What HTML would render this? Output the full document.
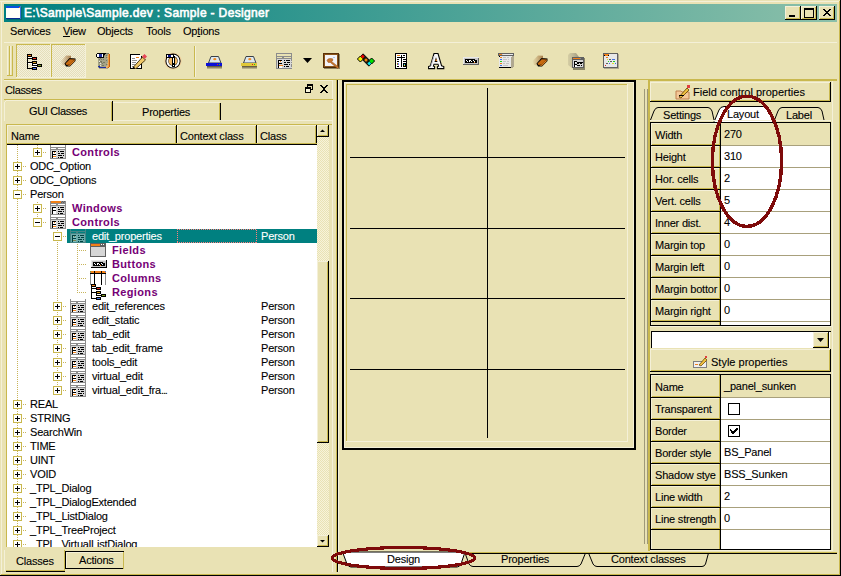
<!DOCTYPE html><html><head><meta charset="utf-8"><style>*{margin:0;padding:0;box-sizing:border-box}html,body{width:841px;height:576px;overflow:hidden;background:#E9E2B4;font-family:"Liberation Sans",sans-serif;font-size:11px;color:#000;position:relative}.a{position:absolute}.t{white-space:nowrap;line-height:13px;letter-spacing:-0.2px;-webkit-text-stroke:0.1px currentColor}u{text-decoration:underline}</style></head><body><div class="a" style="left:0px;top:1px;width:841px;height:1px;background:#F4F0D8;"></div><div class="a" style="left:1px;top:1px;width:1px;height:574px;background:#F4F0D8;"></div><div class="a" style="left:839px;top:1px;width:1px;height:574px;background:#C9B84E;"></div><div class="a" style="left:1px;top:574px;width:839px;height:1px;background:#C9B84E;"></div><div class="a" style="left:840px;top:0px;width:1px;height:576px;background:#000;"></div><div class="a" style="left:0px;top:575px;width:841px;height:1px;background:#000;"></div><div class="a" style="left:4px;top:4px;width:833px;height:18px;background:#008080;background:linear-gradient(to right,#008080,#8CC0AA)"></div><svg class="a" style="left:6px;top:6px" width="16" height="14"><rect x="1" y="1" width="15" height="13" fill="#005858" opacity="0.5"/><rect x="0" y="0" width="15" height="13" fill="#FFFFF8"/><rect x="0" y="0" width="15" height="2" fill="#0A50E0"/><rect x="0" y="12" width="15" height="1" fill="#0A2A90"/><rect x="14" y="0" width="1" height="13" fill="#3A70D8"/><rect x="13" y="1" width="1" height="1" fill="#F06030"/></svg><div class="a t" style="left:24px;top:5px;color:#fff;font-size:12px;line-height:16px;letter-spacing:0.35px;-webkit-text-stroke:0.6px #fff">E:\Sample\Sample.dev : Sample - Designer</div><div class="a" style="left:785px;top:6px;width:16px;height:14px;background:#E9E2B4;"></div><div class="a" style="left:785px;top:6px;width:16px;height:1px;background:#F4F0D8;"></div><div class="a" style="left:785px;top:6px;width:1px;height:14px;background:#F4F0D8;"></div><div class="a" style="left:785px;top:19px;width:16px;height:1px;background:#000000;"></div><div class="a" style="left:800px;top:6px;width:1px;height:14px;background:#000000;"></div><div class="a" style="left:786px;top:18px;width:14px;height:1px;background:#C9B84E;"></div><div class="a" style="left:799px;top:7px;width:1px;height:12px;background:#C9B84E;"></div><svg class="a" style="left:785px;top:6px" width="16" height="14"><rect x="4" y="9" width="6" height="2" fill="#000"/></svg><div class="a" style="left:801px;top:6px;width:16px;height:14px;background:#E9E2B4;"></div><div class="a" style="left:801px;top:6px;width:16px;height:1px;background:#F4F0D8;"></div><div class="a" style="left:801px;top:6px;width:1px;height:14px;background:#F4F0D8;"></div><div class="a" style="left:801px;top:19px;width:16px;height:1px;background:#000000;"></div><div class="a" style="left:816px;top:6px;width:1px;height:14px;background:#000000;"></div><div class="a" style="left:802px;top:18px;width:14px;height:1px;background:#C9B84E;"></div><div class="a" style="left:815px;top:7px;width:1px;height:12px;background:#C9B84E;"></div><svg class="a" style="left:801px;top:6px" width="16" height="14"><rect x="3" y="2" width="9" height="9" fill="none" stroke="#000" stroke-width="1" transform="translate(0.5,0.5)"/><rect x="3" y="2" width="9" height="2" fill="#000"/></svg><div class="a" style="left:819px;top:6px;width:16px;height:14px;background:#E9E2B4;"></div><div class="a" style="left:819px;top:6px;width:16px;height:1px;background:#F4F0D8;"></div><div class="a" style="left:819px;top:6px;width:1px;height:14px;background:#F4F0D8;"></div><div class="a" style="left:819px;top:19px;width:16px;height:1px;background:#000000;"></div><div class="a" style="left:834px;top:6px;width:1px;height:14px;background:#000000;"></div><div class="a" style="left:820px;top:18px;width:14px;height:1px;background:#C9B84E;"></div><div class="a" style="left:833px;top:7px;width:1px;height:12px;background:#C9B84E;"></div><svg class="a" style="left:819px;top:6px" width="16" height="14"></svg><svg class="a" style="left:823px;top:9px" width="8" height="7" shape-rendering="crispEdges"><rect x="0" y="0" width="2" height="1" fill="#000000"/><rect x="6" y="0" width="2" height="1" fill="#000000"/><rect x="1" y="1" width="2" height="1" fill="#000000"/><rect x="5" y="1" width="2" height="1" fill="#000000"/><rect x="2" y="2" width="4" height="1" fill="#000000"/><rect x="3" y="3" width="2" height="1" fill="#000000"/><rect x="2" y="4" width="4" height="1" fill="#000000"/><rect x="1" y="5" width="2" height="1" fill="#000000"/><rect x="5" y="5" width="2" height="1" fill="#000000"/><rect x="0" y="6" width="2" height="1" fill="#000000"/><rect x="6" y="6" width="2" height="1" fill="#000000"/></svg><div class="a t" style="left:10px;top:25px;">Services</div><div class="a t" style="left:63px;top:25px;"><u>V</u>iew</div><div class="a t" style="left:97px;top:25px;">Objects</div><div class="a t" style="left:146px;top:25px;">Tools</div><div class="a t" style="left:183px;top:25px;">Op<u>t</u>ions</div><div class="a" style="left:4px;top:42px;width:833px;height:1px;background:#F4F0D8;"></div><div class="a" style="left:4px;top:79px;width:833px;height:1px;background:#C9B84E;"></div><div class="a" style="left:7px;top:46px;width:1px;height:30px;background:#F4F0D8;"></div><div class="a" style="left:9px;top:46px;width:1px;height:30px;background:#C9B84E;"></div><div class="a" style="left:10px;top:46px;width:1px;height:30px;background:#F4F0D8;"></div><div class="a" style="left:12px;top:46px;width:1px;height:30px;background:#C9B84E;"></div><div class="a" style="left:7px;top:75px;width:6px;height:1px;background:#C9B84E;"></div><div class="a" style="left:16px;top:44px;width:35px;height:34px;background:#EFEBD2;background-image:repeating-conic-gradient(#F4F0DA 0 25%,#E4DEBA 0 50%);background-size:2px 2px"></div><div class="a" style="left:16px;top:44px;width:35px;height:1px;background:#C9B84E;"></div><div class="a" style="left:16px;top:44px;width:1px;height:34px;background:#C9B84E;"></div><div class="a" style="left:16px;top:77px;width:35px;height:1px;background:#F4F0D8;"></div><div class="a" style="left:50px;top:44px;width:1px;height:34px;background:#F4F0D8;"></div><div class="a" style="left:51px;top:44px;width:35px;height:34px;background:#EFEBD2;background-image:repeating-conic-gradient(#F4F0DA 0 25%,#E4DEBA 0 50%);background-size:2px 2px"></div><div class="a" style="left:51px;top:44px;width:35px;height:1px;background:#C9B84E;"></div><div class="a" style="left:51px;top:44px;width:1px;height:34px;background:#C9B84E;"></div><div class="a" style="left:51px;top:77px;width:35px;height:1px;background:#F4F0D8;"></div><div class="a" style="left:85px;top:44px;width:1px;height:34px;background:#F4F0D8;"></div><div class="a" style="left:194px;top:46px;width:1px;height:31px;background:#C9B84E;"></div><div class="a" style="left:195px;top:46px;width:1px;height:31px;background:#F4F0D8;"></div><svg class="a" style="left:27px;top:54px" width="15" height="16" shape-rendering="crispEdges"><rect x="0" y="0" width="5" height="1" fill="#000000"/><rect x="0" y="1" width="1" height="1" fill="#000000"/><rect x="1" y="1" width="3" height="1" fill="#F08018"/><rect x="4" y="1" width="1" height="1" fill="#000000"/><rect x="0" y="2" width="5" height="1" fill="#000000"/><rect x="0" y="3" width="1" height="1" fill="#000000"/><rect x="1" y="3" width="4" height="1" fill="#FFFFFF"/><rect x="5" y="3" width="5" height="1" fill="#000000"/><rect x="0" y="4" width="6" height="1" fill="#000000"/><rect x="6" y="4" width="3" height="1" fill="#E03020"/><rect x="9" y="4" width="1" height="1" fill="#000000"/><rect x="0" y="5" width="1" height="1" fill="#000000"/><rect x="5" y="5" width="5" height="1" fill="#000000"/><rect x="0" y="6" width="1" height="1" fill="#000000"/><rect x="0" y="7" width="1" height="1" fill="#000000"/><rect x="5" y="7" width="5" height="1" fill="#000000"/><rect x="0" y="8" width="6" height="1" fill="#000000"/><rect x="6" y="8" width="3" height="1" fill="#D8A020"/><rect x="9" y="8" width="1" height="1" fill="#000000"/><rect x="0" y="9" width="1" height="1" fill="#000000"/><rect x="1" y="9" width="4" height="1" fill="#FFFFFF"/><rect x="5" y="9" width="5" height="1" fill="#000000"/><rect x="0" y="10" width="1" height="1" fill="#000000"/><rect x="5" y="10" width="1" height="1" fill="#000000"/><rect x="6" y="10" width="4" height="1" fill="#FFFFFF"/><rect x="10" y="10" width="5" height="1" fill="#000000"/><rect x="0" y="11" width="1" height="1" fill="#000000"/><rect x="5" y="11" width="6" height="1" fill="#000000"/><rect x="11" y="11" width="3" height="1" fill="#80A020"/><rect x="14" y="11" width="1" height="1" fill="#000000"/><rect x="0" y="12" width="1" height="1" fill="#000000"/><rect x="5" y="12" width="5" height="1" fill="#FFFFFF"/><rect x="10" y="12" width="5" height="1" fill="#000000"/><rect x="0" y="13" width="1" height="1" fill="#000000"/><rect x="5" y="13" width="5" height="1" fill="#000000"/><rect x="0" y="14" width="6" height="1" fill="#000000"/><rect x="6" y="14" width="3" height="1" fill="#4070E0"/><rect x="9" y="14" width="1" height="1" fill="#000000"/><rect x="5" y="15" width="5" height="1" fill="#000000"/></svg><svg class="a" style="left:60px;top:55px" width="17" height="13" shape-rendering="crispEdges"><defs><linearGradient id="mb" x1="0" y1="0" x2="1" y2="0"><stop offset="0" stop-color="#A87840" stop-opacity="0.05"/><stop offset="1" stop-color="#905820" stop-opacity="0.75"/></linearGradient></defs><path d="M0.5 6 L6 0.5 L11 0.8 L11 3 L5.5 10.5 L2 10 Z" fill="url(#mb)" shape-rendering="auto"/><path d="M4.5 8.5 L9.5 3 L15.5 3.5 L15.5 6 L10 11.5 L6 11.5 Z" fill="#000" shape-rendering="auto"/><path d="M5.5 8.5 L10 4 L14.5 4.5 L10 9.5 L6.5 10 Z" fill="#C86A10" shape-rendering="auto"/><path d="M10 9.5 L14.5 4.8 L14.8 6 L10 10.8 L7 10.8 Z" fill="#F08A20" shape-rendering="auto"/><path d="M9.5 4.2 L14.8 4.4" stroke="#7A4008" stroke-width="1" shape-rendering="auto"/></svg><svg class="a" style="left:532px;top:55px" width="17" height="13" shape-rendering="crispEdges"><defs><linearGradient id="mb" x1="0" y1="0" x2="1" y2="0"><stop offset="0" stop-color="#A87840" stop-opacity="0.05"/><stop offset="1" stop-color="#905820" stop-opacity="0.75"/></linearGradient></defs><path d="M0.5 6 L6 0.5 L11 0.8 L11 3 L5.5 10.5 L2 10 Z" fill="url(#mb)" shape-rendering="auto"/><path d="M4.5 8.5 L9.5 3 L15.5 3.5 L15.5 6 L10 11.5 L6 11.5 Z" fill="#000" shape-rendering="auto"/><path d="M5.5 8.5 L10 4 L14.5 4.5 L10 9.5 L6.5 10 Z" fill="#C86A10" shape-rendering="auto"/><path d="M10 9.5 L14.5 4.8 L14.8 6 L10 10.8 L7 10.8 Z" fill="#F08A20" shape-rendering="auto"/><path d="M9.5 4.2 L14.8 4.4" stroke="#7A4008" stroke-width="1" shape-rendering="auto"/></svg><svg class="a" style="left:96px;top:53px" width="14" height="16" shape-rendering="crispEdges"><rect x="1" y="0" width="9" height="1" fill="#000000"/><rect x="10" y="0" width="3" height="1" fill="#787860"/><rect x="0" y="1" width="1" height="1" fill="#000000"/><rect x="1" y="1" width="2" height="1" fill="#FFFFFF"/><rect x="3" y="1" width="3" height="1" fill="#2030A0"/><rect x="6" y="1" width="1" height="1" fill="#FFFFFF"/><rect x="7" y="1" width="2" height="1" fill="#000000"/><rect x="9" y="1" width="3" height="1" fill="#A4A488"/><rect x="12" y="1" width="1" height="1" fill="#F0A040"/><rect x="13" y="1" width="1" height="1" fill="#C86010"/><rect x="0" y="2" width="1" height="1" fill="#000000"/><rect x="1" y="2" width="2" height="1" fill="#FFFFFF"/><rect x="3" y="2" width="3" height="1" fill="#2030A0"/><rect x="6" y="2" width="1" height="1" fill="#FFFFFF"/><rect x="7" y="2" width="1" height="1" fill="#000000"/><rect x="8" y="2" width="1" height="1" fill="#787860"/><rect x="9" y="2" width="1" height="1" fill="#A4A488"/><rect x="10" y="2" width="1" height="1" fill="#787860"/><rect x="11" y="2" width="1" height="1" fill="#A4A488"/><rect x="12" y="2" width="1" height="1" fill="#F0A040"/><rect x="13" y="2" width="1" height="1" fill="#C86010"/><rect x="0" y="3" width="1" height="1" fill="#000000"/><rect x="1" y="3" width="2" height="1" fill="#FFFFFF"/><rect x="3" y="3" width="3" height="1" fill="#2030A0"/><rect x="6" y="3" width="1" height="1" fill="#FFFFFF"/><rect x="7" y="3" width="1" height="1" fill="#000000"/><rect x="8" y="3" width="3" height="1" fill="#A4A488"/><rect x="11" y="3" width="1" height="1" fill="#E8B070"/><rect x="12" y="3" width="1" height="1" fill="#F0A040"/><rect x="13" y="3" width="1" height="1" fill="#C86010"/><rect x="1" y="4" width="7" height="1" fill="#000000"/><rect x="8" y="4" width="2" height="1" fill="#A4A488"/><rect x="10" y="4" width="1" height="1" fill="#787860"/><rect x="11" y="4" width="1" height="1" fill="#A4A488"/><rect x="12" y="4" width="1" height="1" fill="#F0A040"/><rect x="13" y="4" width="1" height="1" fill="#C86010"/><rect x="2" y="5" width="2" height="1" fill="#A4A488"/><rect x="4" y="5" width="1" height="1" fill="#787860"/><rect x="5" y="5" width="6" height="1" fill="#A4A488"/><rect x="11" y="5" width="1" height="1" fill="#E8B070"/><rect x="12" y="5" width="1" height="1" fill="#F0A040"/><rect x="13" y="5" width="1" height="1" fill="#C86010"/><rect x="2" y="6" width="1" height="1" fill="#A4A488"/><rect x="3" y="6" width="1" height="1" fill="#787860"/><rect x="4" y="6" width="1" height="1" fill="#A4A488"/><rect x="5" y="6" width="1" height="1" fill="#787860"/><rect x="6" y="6" width="1" height="1" fill="#A4A488"/><rect x="7" y="6" width="1" height="1" fill="#787860"/><rect x="8" y="6" width="4" height="1" fill="#A4A488"/><rect x="12" y="6" width="1" height="1" fill="#F0A040"/><rect x="13" y="6" width="1" height="1" fill="#C86010"/><rect x="2" y="7" width="8" height="1" fill="#A4A488"/><rect x="10" y="7" width="1" height="1" fill="#787860"/><rect x="11" y="7" width="1" height="1" fill="#A4A488"/><rect x="12" y="7" width="1" height="1" fill="#F0A040"/><rect x="13" y="7" width="1" height="1" fill="#C86010"/><rect x="2" y="8" width="1" height="1" fill="#A4A488"/><rect x="3" y="8" width="1" height="1" fill="#E8E8E8"/><rect x="4" y="8" width="2" height="1" fill="#787860"/><rect x="6" y="8" width="6" height="1" fill="#A4A488"/><rect x="12" y="8" width="1" height="1" fill="#F0A040"/><rect x="13" y="8" width="1" height="1" fill="#C86010"/><rect x="2" y="9" width="1" height="1" fill="#A4A488"/><rect x="3" y="9" width="1" height="1" fill="#787860"/><rect x="4" y="9" width="1" height="1" fill="#A4A488"/><rect x="5" y="9" width="1" height="1" fill="#787860"/><rect x="6" y="9" width="1" height="1" fill="#A4A488"/><rect x="7" y="9" width="2" height="1" fill="#787860"/><rect x="9" y="9" width="3" height="1" fill="#A4A488"/><rect x="12" y="9" width="1" height="1" fill="#F0A040"/><rect x="13" y="9" width="1" height="1" fill="#C86010"/><rect x="2" y="10" width="2" height="1" fill="#A4A488"/><rect x="4" y="10" width="1" height="1" fill="#E8E8E8"/><rect x="5" y="10" width="1" height="1" fill="#A4A488"/><rect x="6" y="10" width="1" height="1" fill="#787860"/><rect x="7" y="10" width="4" height="1" fill="#A4A488"/><rect x="11" y="10" width="1" height="1" fill="#E8B070"/><rect x="12" y="10" width="1" height="1" fill="#F0A040"/><rect x="13" y="10" width="1" height="1" fill="#C86010"/><rect x="2" y="11" width="8" height="1" fill="#A4A488"/><rect x="10" y="11" width="1" height="1" fill="#787860"/><rect x="11" y="11" width="1" height="1" fill="#A4A488"/><rect x="12" y="11" width="1" height="1" fill="#F0A040"/><rect x="13" y="11" width="1" height="1" fill="#C86010"/><rect x="2" y="12" width="1" height="1" fill="#A4A488"/><rect x="3" y="12" width="1" height="1" fill="#787860"/><rect x="4" y="12" width="1" height="1" fill="#E8E8E8"/><rect x="5" y="12" width="1" height="1" fill="#A4A488"/><rect x="6" y="12" width="2" height="1" fill="#787860"/><rect x="8" y="12" width="3" height="1" fill="#A4A488"/><rect x="11" y="12" width="1" height="1" fill="#E8B070"/><rect x="12" y="12" width="1" height="1" fill="#F0A040"/><rect x="13" y="12" width="1" height="1" fill="#C86010"/><rect x="2" y="13" width="2" height="1" fill="#2030A0"/><rect x="4" y="13" width="6" height="1" fill="#A4A488"/><rect x="10" y="13" width="2" height="1" fill="#E8B070"/><rect x="12" y="13" width="1" height="1" fill="#F0A040"/><rect x="13" y="13" width="1" height="1" fill="#C86010"/><rect x="2" y="14" width="1" height="1" fill="#A4A488"/><rect x="3" y="14" width="7" height="1" fill="#2030A0"/><rect x="10" y="14" width="1" height="1" fill="#E8B070"/><rect x="11" y="14" width="1" height="1" fill="#F0A040"/><rect x="12" y="14" width="1" height="1" fill="#C86010"/><rect x="3" y="15" width="9" height="1" fill="#B0A890"/></svg><svg class="a" style="left:130px;top:53px" width="17" height="16" shape-rendering="crispEdges"><rect x="0" y="1" width="12" height="15" fill="#000"/><rect x="1" y="2" width="10" height="13" fill="#fff"/><path d="M9 1 L12 4 L12 1 Z" fill="#E9E2B4"/><rect x="2" y="5" width="3" height="1" fill="#909090"/><rect x="6" y="4" width="3" height="1" fill="#F08018"/><rect x="2" y="7" width="5" height="1" fill="#909090"/><rect x="2" y="9" width="4" height="1" fill="#909090"/><rect x="2" y="11" width="3" height="1" fill="#909090"/><rect x="2" y="13" width="7" height="1" fill="#909090"/><path d="M3 14.5 L12.5 4 L15.5 7 L5.5 16 Z" fill="#F0C868" stroke="#3A2A08" stroke-width="0.9" shape-rendering="auto"/><path d="M12 3.5 L14.5 1 L17 3.5 L14.8 6 Z" fill="#E84858" shape-rendering="auto"/><path d="M2.5 16 L3.5 13.5 L5.5 15.5 Z" fill="#000" shape-rendering="auto"/></svg><svg class="a" style="left:164px;top:52px" width="18" height="18" shape-rendering="crispEdges"><g shape-rendering="auto"><circle cx="9" cy="9" r="8.6" fill="#F4C890" opacity="0.7"/><circle cx="9" cy="9" r="7.6" fill="#000"/><circle cx="9" cy="9" r="6.6" fill="#fff"/><circle cx="9" cy="9" r="4.8" fill="#303030"/><circle cx="9" cy="9" r="4.3" fill="#F4B860"/></g><rect x="7.5" y="4" width="3" height="8" fill="#000"/><rect x="8.5" y="5" width="1.2" height="6" fill="#fff"/><rect x="7.5" y="12" width="3" height="3" fill="#000"/><rect x="8.5" y="12.8" width="1.2" height="1.4" fill="#fff"/><rect x="2" y="2" width="8" height="4" fill="#000"/><rect x="3" y="3" width="1" height="2" fill="#fff"/><rect x="4" y="3" width="3" height="2" fill="#101890"/><rect x="7" y="3" width="2" height="2" fill="#fff"/></svg><svg class="a" style="left:206px;top:56px" width="18" height="15" shape-rendering="crispEdges"><path d="M5 0.5 H12.5 L15 7 H2.5 Z" fill="#DDE8EE" stroke="#3A4048" stroke-width="1" shape-rendering="auto"/><ellipse cx="8.8" cy="3.2" rx="1.6" ry="1.1" fill="#F08A20" shape-rendering="auto"/><rect x="0" y="7" width="16" height="3" fill="#0A10D8"/><rect x="11" y="8" width="1" height="1" fill="#E02020"/><rect x="13" y="8" width="1" height="1" fill="#20C020"/><defs><linearGradient id="ds" x1="0" y1="0" x2="0" y2="1"><stop offset="0" stop-color="#38301A" stop-opacity="0.85"/><stop offset="1" stop-color="#38301A" stop-opacity="0.15"/></linearGradient></defs><rect x="1" y="10" width="15" height="3" fill="url(#ds)"/></svg><svg class="a" style="left:241px;top:56px" width="18" height="15" shape-rendering="crispEdges"><path d="M5 0.5 H12.5 L15 7 H2.5 Z" fill="#DDE8EE" stroke="#3A4048" stroke-width="1" shape-rendering="auto"/><ellipse cx="8.8" cy="3.2" rx="1.6" ry="1.1" fill="#F08A20" shape-rendering="auto"/><rect x="0" y="7" width="16" height="3" fill="#E0C838"/><rect x="11" y="8" width="1" height="1" fill="#E02020"/><rect x="13" y="8" width="1" height="1" fill="#20C020"/><defs><linearGradient id="ds" x1="0" y1="0" x2="0" y2="1"><stop offset="0" stop-color="#38301A" stop-opacity="0.85"/><stop offset="1" stop-color="#38301A" stop-opacity="0.15"/></linearGradient></defs><rect x="1" y="10" width="15" height="3" fill="url(#ds)"/></svg><svg class="a" style="left:276px;top:53px" width="16" height="16" shape-rendering="crispEdges"><rect x="0" y="0" width="16" height="1" fill="#8C8C8C"/><rect x="0" y="1" width="1" height="1" fill="#8C8C8C"/><rect x="15" y="1" width="1" height="1" fill="#8C8C8C"/><rect x="0" y="2" width="1" height="1" fill="#8C8C8C"/><rect x="15" y="2" width="1" height="1" fill="#8C8C8C"/><rect x="0" y="3" width="16" height="1" fill="#8C8C8C"/><rect x="0" y="4" width="1" height="1" fill="#8C8C8C"/><rect x="6" y="4" width="2" height="1" fill="#8C8C8C"/><rect x="15" y="4" width="1" height="1" fill="#8C8C8C"/><rect x="0" y="5" width="16" height="1" fill="#8C8C8C"/><rect x="0" y="6" width="1" height="1" fill="#8C8C8C"/><rect x="1" y="6" width="14" height="1" fill="#D6D6D6"/><rect x="15" y="6" width="1" height="1" fill="#8C8C8C"/><rect x="0" y="7" width="1" height="1" fill="#8C8C8C"/><rect x="1" y="7" width="1" height="1" fill="#D6D6D6"/><rect x="2" y="7" width="4" height="1" fill="#000000"/><rect x="6" y="7" width="2" height="1" fill="#D6D6D6"/><rect x="8" y="7" width="1" height="1" fill="#000000"/><rect x="9" y="7" width="1" height="1" fill="#D6D6D6"/><rect x="10" y="7" width="4" height="1" fill="#000000"/><rect x="14" y="7" width="1" height="1" fill="#D6D6D6"/><rect x="15" y="7" width="1" height="1" fill="#8C8C8C"/><rect x="0" y="8" width="1" height="1" fill="#8C8C8C"/><rect x="1" y="8" width="1" height="1" fill="#D6D6D6"/><rect x="2" y="8" width="1" height="1" fill="#000000"/><rect x="3" y="8" width="1" height="1" fill="#FFFFFF"/><rect x="4" y="8" width="1" height="1" fill="#F08018"/><rect x="5" y="8" width="1" height="1" fill="#FFFFFF"/><rect x="6" y="8" width="10" height="1" fill="#D6D6D6"/><rect x="0" y="9" width="1" height="1" fill="#8C8C8C"/><rect x="1" y="9" width="1" height="1" fill="#D6D6D6"/><rect x="2" y="9" width="1" height="1" fill="#000000"/><rect x="3" y="9" width="5" height="1" fill="#D6D6D6"/><rect x="8" y="9" width="2" height="1" fill="#000000"/><rect x="10" y="9" width="1" height="1" fill="#D6D6D6"/><rect x="11" y="9" width="3" height="1" fill="#000000"/><rect x="14" y="9" width="1" height="1" fill="#D6D6D6"/><rect x="15" y="9" width="1" height="1" fill="#8C8C8C"/><rect x="0" y="10" width="1" height="1" fill="#8C8C8C"/><rect x="1" y="10" width="1" height="1" fill="#D6D6D6"/><rect x="2" y="10" width="4" height="1" fill="#000000"/><rect x="6" y="10" width="10" height="1" fill="#D6D6D6"/><rect x="0" y="11" width="1" height="1" fill="#8C8C8C"/><rect x="1" y="11" width="1" height="1" fill="#D6D6D6"/><rect x="2" y="11" width="1" height="1" fill="#000000"/><rect x="3" y="11" width="5" height="1" fill="#D6D6D6"/><rect x="8" y="11" width="4" height="1" fill="#000000"/><rect x="12" y="11" width="1" height="1" fill="#D6D6D6"/><rect x="13" y="11" width="1" height="1" fill="#000000"/><rect x="14" y="11" width="1" height="1" fill="#D6D6D6"/><rect x="15" y="11" width="1" height="1" fill="#8C8C8C"/><rect x="0" y="12" width="1" height="1" fill="#8C8C8C"/><rect x="1" y="12" width="1" height="1" fill="#D6D6D6"/><rect x="2" y="12" width="1" height="1" fill="#000000"/><rect x="3" y="12" width="4" height="1" fill="#F08018"/><rect x="7" y="12" width="8" height="1" fill="#D6D6D6"/><rect x="15" y="12" width="1" height="1" fill="#8C8C8C"/><rect x="0" y="13" width="1" height="1" fill="#8C8C8C"/><rect x="1" y="13" width="1" height="1" fill="#D6D6D6"/><rect x="2" y="13" width="1" height="1" fill="#000000"/><rect x="3" y="13" width="3" height="1" fill="#FFFFFF"/><rect x="6" y="13" width="2" height="1" fill="#D6D6D6"/><rect x="8" y="13" width="1" height="1" fill="#000000"/><rect x="9" y="13" width="1" height="1" fill="#D6D6D6"/><rect x="10" y="13" width="3" height="1" fill="#000000"/><rect x="13" y="13" width="2" height="1" fill="#D6D6D6"/><rect x="15" y="13" width="1" height="1" fill="#8C8C8C"/><rect x="0" y="14" width="1" height="1" fill="#8C8C8C"/><rect x="1" y="14" width="1" height="1" fill="#D6D6D6"/><rect x="2" y="14" width="1" height="1" fill="#000000"/><rect x="3" y="14" width="3" height="1" fill="#FFFFFF"/><rect x="6" y="14" width="10" height="1" fill="#D6D6D6"/><rect x="0" y="15" width="16" height="1" fill="#8C8C8C"/></svg><svg class="a" style="left:303px;top:58px" width="10" height="6" shape-rendering="crispEdges"><path d="M0 0 H9 L4.5 5 Z" fill="#000" shape-rendering="auto"/></svg><svg class="a" style="left:323px;top:53px" width="18" height="17" shape-rendering="crispEdges"><rect x="1" y="1" width="16" height="15" fill="#3A2A10" opacity="0.5"/><rect x="0" y="0" width="16" height="15" fill="#8A5418"/><rect x="0" y="0" width="16" height="1" fill="#5A3008"/><rect x="0" y="0" width="1" height="15" fill="#5A3008"/><rect x="1" y="14" width="15" height="1" fill="#4A2808"/><rect x="15" y="1" width="1" height="14" fill="#4A2808"/><rect x="2" y="2" width="12" height="11" fill="#F4F2F6"/><path d="M4 7.5 Q4.5 5.5 7 5.5 L9.5 5.8 L10 7.2 L8.6 8.4 L15.8 14.2 L14.6 15.6 L7.4 9.4 L5.2 9.4 Z" fill="#C8742C" stroke="#8A4A18" stroke-width="0.5" shape-rendering="auto"/><rect x="10" y="4" width="2" height="1" fill="#A8C8E8"/></svg><svg class="a" style="left:354px;top:50px" width="24" height="20" shape-rendering="crispEdges"><g shape-rendering="auto"><rect x="5.6" y="7.7" width="12.8" height="4.6" transform="rotate(45 12 10)" fill="#181810" stroke="#000" stroke-width="0.9"/><path d="M6.4 6 L9.4 9 L6.4 12 L3.4 9 Z" fill="#F0F000" stroke="#000" stroke-width="1"/><path d="M17.6 8 L20.6 11 L17.6 14 L14.6 11 Z" fill="#00E000" stroke="#000" stroke-width="1"/><path d="M8.7 4.6 L10.6 6.5 L8.7 8.4 L6.8 6.5 Z" fill="#F00000"/><circle cx="12" cy="10" r="1.5" fill="#F08010"/><path d="M15.3 11.6 L17.2 13.5 L15.3 15.4 L13.4 13.5 Z" fill="#00E8F0"/></g></svg><svg class="a" style="left:395px;top:53px" width="12" height="16" shape-rendering="crispEdges"><rect x="0" y="0" width="12" height="1" fill="#000000"/><rect x="0" y="1" width="1" height="1" fill="#000000"/><rect x="1" y="1" width="10" height="1" fill="#FFFFFF"/><rect x="11" y="1" width="1" height="1" fill="#000000"/><rect x="0" y="2" width="1" height="1" fill="#000000"/><rect x="1" y="2" width="1" height="1" fill="#FFFFFF"/><rect x="2" y="2" width="3" height="1" fill="#F08018"/><rect x="5" y="2" width="1" height="1" fill="#FFFFFF"/><rect x="6" y="2" width="1" height="1" fill="#000000"/><rect x="7" y="2" width="1" height="1" fill="#FFFFFF"/><rect x="8" y="2" width="2" height="1" fill="#000000"/><rect x="10" y="2" width="1" height="1" fill="#FFFFFF"/><rect x="11" y="2" width="1" height="1" fill="#000000"/><rect x="0" y="3" width="1" height="1" fill="#000000"/><rect x="1" y="3" width="5" height="1" fill="#FFFFFF"/><rect x="6" y="3" width="1" height="1" fill="#000000"/><rect x="7" y="3" width="4" height="1" fill="#FFFFFF"/><rect x="11" y="3" width="1" height="1" fill="#000000"/><rect x="0" y="4" width="1" height="1" fill="#000000"/><rect x="1" y="4" width="1" height="1" fill="#FFFFFF"/><rect x="2" y="4" width="8" height="1" fill="#000000"/><rect x="10" y="4" width="1" height="1" fill="#FFFFFF"/><rect x="11" y="4" width="1" height="1" fill="#000000"/><rect x="0" y="5" width="1" height="1" fill="#000000"/><rect x="1" y="5" width="5" height="1" fill="#FFFFFF"/><rect x="6" y="5" width="1" height="1" fill="#000000"/><rect x="7" y="5" width="4" height="1" fill="#FFFFFF"/><rect x="11" y="5" width="1" height="1" fill="#000000"/><rect x="0" y="6" width="1" height="1" fill="#000000"/><rect x="1" y="6" width="1" height="1" fill="#FFFFFF"/><rect x="2" y="6" width="2" height="1" fill="#000000"/><rect x="4" y="6" width="2" height="1" fill="#FFFFFF"/><rect x="6" y="6" width="1" height="1" fill="#000000"/><rect x="7" y="6" width="1" height="1" fill="#FFFFFF"/><rect x="8" y="6" width="4" height="1" fill="#000000"/><rect x="0" y="7" width="1" height="1" fill="#000000"/><rect x="1" y="7" width="5" height="1" fill="#FFFFFF"/><rect x="6" y="7" width="1" height="1" fill="#000000"/><rect x="7" y="7" width="4" height="1" fill="#FFFFFF"/><rect x="11" y="7" width="1" height="1" fill="#000000"/><rect x="0" y="8" width="1" height="1" fill="#000000"/><rect x="1" y="8" width="1" height="1" fill="#FFFFFF"/><rect x="2" y="8" width="2" height="1" fill="#000000"/><rect x="4" y="8" width="2" height="1" fill="#FFFFFF"/><rect x="6" y="8" width="1" height="1" fill="#000000"/><rect x="7" y="8" width="1" height="1" fill="#FFFFFF"/><rect x="8" y="8" width="4" height="1" fill="#000000"/><rect x="0" y="9" width="1" height="1" fill="#000000"/><rect x="1" y="9" width="5" height="1" fill="#FFFFFF"/><rect x="6" y="9" width="1" height="1" fill="#000000"/><rect x="7" y="9" width="4" height="1" fill="#FFFFFF"/><rect x="11" y="9" width="1" height="1" fill="#000000"/><rect x="0" y="10" width="1" height="1" fill="#000000"/><rect x="1" y="10" width="1" height="1" fill="#FFFFFF"/><rect x="2" y="10" width="1" height="1" fill="#E03020"/><rect x="3" y="10" width="1" height="1" fill="#20C8F0"/><rect x="4" y="10" width="2" height="1" fill="#FFFFFF"/><rect x="6" y="10" width="1" height="1" fill="#000000"/><rect x="7" y="10" width="1" height="1" fill="#FFFFFF"/><rect x="8" y="10" width="4" height="1" fill="#000000"/><rect x="0" y="11" width="1" height="1" fill="#000000"/><rect x="1" y="11" width="1" height="1" fill="#FFFFFF"/><rect x="2" y="11" width="1" height="1" fill="#20D020"/><rect x="3" y="11" width="1" height="1" fill="#F020F0"/><rect x="4" y="11" width="2" height="1" fill="#FFFFFF"/><rect x="6" y="11" width="1" height="1" fill="#000000"/><rect x="7" y="11" width="1" height="1" fill="#FFFFFF"/><rect x="8" y="11" width="1" height="1" fill="#000000"/><rect x="9" y="11" width="1" height="1" fill="#20C8F0"/><rect x="10" y="11" width="2" height="1" fill="#000000"/><rect x="0" y="12" width="1" height="1" fill="#000000"/><rect x="1" y="12" width="5" height="1" fill="#FFFFFF"/><rect x="6" y="12" width="1" height="1" fill="#000000"/><rect x="7" y="12" width="1" height="1" fill="#FFFFFF"/><rect x="8" y="12" width="1" height="1" fill="#000000"/><rect x="9" y="12" width="1" height="1" fill="#E0E020"/><rect x="10" y="12" width="2" height="1" fill="#000000"/><rect x="0" y="13" width="1" height="1" fill="#000000"/><rect x="1" y="13" width="1" height="1" fill="#FFFFFF"/><rect x="2" y="13" width="2" height="1" fill="#000000"/><rect x="4" y="13" width="2" height="1" fill="#FFFFFF"/><rect x="6" y="13" width="1" height="1" fill="#000000"/><rect x="7" y="13" width="1" height="1" fill="#FFFFFF"/><rect x="8" y="13" width="4" height="1" fill="#000000"/><rect x="0" y="14" width="1" height="1" fill="#000000"/><rect x="1" y="14" width="10" height="1" fill="#FFFFFF"/><rect x="11" y="14" width="1" height="1" fill="#000000"/><rect x="0" y="15" width="12" height="1" fill="#000000"/></svg><svg class="a" style="left:428px;top:53px" width="17" height="17" shape-rendering="crispEdges"><path d="M6 0.5 H10 L13.6 12.8 L15.8 13.6 V15.6 H9.4 V13.6 L10.6 13.2 L10 11.2 H6 L5.4 13.2 L6.6 13.6 V15.6 H0.4 V13.6 L2.4 12.8 Z" fill="#F8F8F8" stroke="#000" stroke-width="1.1" shape-rendering="auto"/><path d="M8 4.2 L9.5 9 H6.5 Z" fill="#000" shape-rendering="auto"/><rect x="7.5" y="6.5" width="1.5" height="1.5" fill="#F08018" shape-rendering="auto"/><path d="M3 13 L6 3" stroke="#B8B8C8" stroke-width="1" shape-rendering="auto"/></svg><svg class="a" style="left:463px;top:57px" width="16" height="8" shape-rendering="crispEdges"><rect x="0" y="0" width="16" height="1" fill="#E8E8E8"/><rect x="0" y="1" width="1" height="1" fill="#E8E8E8"/><rect x="1" y="1" width="14" height="1" fill="#C4C4C4"/><rect x="15" y="1" width="1" height="1" fill="#606060"/><rect x="0" y="2" width="1" height="1" fill="#E8E8E8"/><rect x="1" y="2" width="1" height="1" fill="#C4C4C4"/><rect x="2" y="2" width="10" height="1" fill="#000000"/><rect x="12" y="2" width="3" height="1" fill="#C4C4C4"/><rect x="15" y="2" width="1" height="1" fill="#606060"/><rect x="0" y="3" width="1" height="1" fill="#E8E8E8"/><rect x="1" y="3" width="1" height="1" fill="#C4C4C4"/><rect x="2" y="3" width="1" height="1" fill="#000000"/><rect x="3" y="3" width="1" height="1" fill="#FFFFFF"/><rect x="4" y="3" width="2" height="1" fill="#000000"/><rect x="6" y="3" width="2" height="1" fill="#FFFFFF"/><rect x="8" y="3" width="2" height="1" fill="#000000"/><rect x="10" y="3" width="1" height="1" fill="#FFFFFF"/><rect x="11" y="3" width="3" height="1" fill="#000000"/><rect x="14" y="3" width="1" height="1" fill="#C4C4C4"/><rect x="15" y="3" width="1" height="1" fill="#606060"/><rect x="0" y="4" width="1" height="1" fill="#E8E8E8"/><rect x="1" y="4" width="1" height="1" fill="#C4C4C4"/><rect x="2" y="4" width="2" height="1" fill="#000000"/><rect x="4" y="4" width="1" height="1" fill="#FFFFFF"/><rect x="5" y="4" width="1" height="1" fill="#000000"/><rect x="6" y="4" width="1" height="1" fill="#FFFFFF"/><rect x="7" y="4" width="1" height="1" fill="#000000"/><rect x="8" y="4" width="1" height="1" fill="#FFFFFF"/><rect x="9" y="4" width="2" height="1" fill="#000000"/><rect x="11" y="4" width="1" height="1" fill="#FFFFFF"/><rect x="12" y="4" width="2" height="1" fill="#000000"/><rect x="14" y="4" width="1" height="1" fill="#C4C4C4"/><rect x="15" y="4" width="1" height="1" fill="#606060"/><rect x="0" y="5" width="1" height="1" fill="#E8E8E8"/><rect x="1" y="5" width="1" height="1" fill="#C4C4C4"/><rect x="2" y="5" width="9" height="1" fill="#000000"/><rect x="11" y="5" width="1" height="1" fill="#F08018"/><rect x="12" y="5" width="2" height="1" fill="#000000"/><rect x="14" y="5" width="1" height="1" fill="#C4C4C4"/><rect x="15" y="5" width="1" height="1" fill="#606060"/><rect x="0" y="6" width="1" height="1" fill="#E8E8E8"/><rect x="1" y="6" width="14" height="1" fill="#C4C4C4"/><rect x="15" y="6" width="1" height="1" fill="#606060"/><rect x="0" y="7" width="16" height="1" fill="#606060"/></svg><svg class="a" style="left:498px;top:53px" width="16" height="16" shape-rendering="crispEdges"><rect x="0" y="0" width="16" height="1" fill="#606060"/><rect x="0" y="1" width="1" height="1" fill="#606060"/><rect x="1" y="1" width="3" height="1" fill="#F08018"/><rect x="4" y="1" width="1" height="1" fill="#D6D6D6"/><rect x="5" y="1" width="10" height="1" fill="#E8E8E8"/><rect x="15" y="1" width="1" height="1" fill="#606060"/><rect x="0" y="2" width="16" height="1" fill="#606060"/><rect x="1" y="3" width="1" height="1" fill="#000000"/><rect x="2" y="3" width="12" height="1" fill="#E8E8E8"/><rect x="14" y="3" width="2" height="1" fill="#B0A890"/><rect x="1" y="4" width="1" height="1" fill="#E8E8E8"/><rect x="2" y="4" width="2" height="1" fill="#F08018"/><rect x="4" y="4" width="1" height="1" fill="#E8E8E8"/><rect x="5" y="4" width="3" height="1" fill="#C4C4C4"/><rect x="8" y="4" width="1" height="1" fill="#E8E8E8"/><rect x="9" y="4" width="2" height="1" fill="#C4C4C4"/><rect x="11" y="4" width="2" height="1" fill="#E8E8E8"/><rect x="13" y="4" width="3" height="1" fill="#B0A890"/><rect x="1" y="5" width="12" height="1" fill="#E8E8E8"/><rect x="13" y="5" width="3" height="1" fill="#B0A890"/><rect x="1" y="6" width="1" height="1" fill="#E8E8E8"/><rect x="2" y="6" width="2" height="1" fill="#4070E0"/><rect x="4" y="6" width="1" height="1" fill="#E8E8E8"/><rect x="5" y="6" width="4" height="1" fill="#C4C4C4"/><rect x="9" y="6" width="1" height="1" fill="#E8E8E8"/><rect x="10" y="6" width="1" height="1" fill="#C4C4C4"/><rect x="11" y="6" width="2" height="1" fill="#E8E8E8"/><rect x="13" y="6" width="3" height="1" fill="#B0A890"/><rect x="1" y="7" width="12" height="1" fill="#E8E8E8"/><rect x="13" y="7" width="3" height="1" fill="#B0A890"/><rect x="1" y="8" width="1" height="1" fill="#E8E8E8"/><rect x="2" y="8" width="2" height="1" fill="#20D020"/><rect x="4" y="8" width="1" height="1" fill="#E8E8E8"/><rect x="5" y="8" width="3" height="1" fill="#C4C4C4"/><rect x="8" y="8" width="1" height="1" fill="#E8E8E8"/><rect x="9" y="8" width="2" height="1" fill="#C4C4C4"/><rect x="11" y="8" width="2" height="1" fill="#E8E8E8"/><rect x="13" y="8" width="3" height="1" fill="#B0A890"/><rect x="1" y="9" width="12" height="1" fill="#E8E8E8"/><rect x="13" y="9" width="3" height="1" fill="#B0A890"/><rect x="1" y="10" width="1" height="1" fill="#E8E8E8"/><rect x="2" y="10" width="2" height="1" fill="#F08018"/><rect x="4" y="10" width="1" height="1" fill="#E8E8E8"/><rect x="5" y="10" width="2" height="1" fill="#C4C4C4"/><rect x="7" y="10" width="1" height="1" fill="#E8E8E8"/><rect x="8" y="10" width="3" height="1" fill="#C4C4C4"/><rect x="11" y="10" width="2" height="1" fill="#E8E8E8"/><rect x="13" y="10" width="3" height="1" fill="#B0A890"/><rect x="1" y="11" width="12" height="1" fill="#E8E8E8"/><rect x="13" y="11" width="3" height="1" fill="#B0A890"/><rect x="1" y="12" width="1" height="1" fill="#E8E8E8"/><rect x="2" y="12" width="2" height="1" fill="#4070E0"/><rect x="4" y="12" width="1" height="1" fill="#E8E8E8"/><rect x="5" y="12" width="5" height="1" fill="#C4C4C4"/><rect x="10" y="12" width="3" height="1" fill="#E8E8E8"/><rect x="13" y="12" width="3" height="1" fill="#B0A890"/><rect x="1" y="13" width="12" height="1" fill="#E8E8E8"/><rect x="13" y="13" width="3" height="1" fill="#B0A890"/><rect x="1" y="14" width="12" height="1" fill="#000000"/><rect x="13" y="14" width="2" height="1" fill="#B0A890"/></svg><svg class="a" style="left:567px;top:53px" width="18" height="17" shape-rendering="crispEdges"><defs><linearGradient id="tb" x1="0" y1="0" x2="1" y2="0"><stop offset="0" stop-color="#B0A888" stop-opacity="0.35"/><stop offset="1" stop-color="#8C8470" stop-opacity="0.8"/></linearGradient></defs><path d="M1 2 L3 0 L9 0 L12 4 L5 4 L5 15 L1 12 Z" fill="url(#tb)" shape-rendering="auto"/><rect x="6" y="5" width="12" height="12" fill="#3A3828" opacity="0.55"/></svg><svg class="a" style="left:572px;top:57px" width="12" height="11" shape-rendering="crispEdges"><rect x="0" y="0" width="12" height="1" fill="#606060"/><rect x="0" y="1" width="1" height="1" fill="#606060"/><rect x="1" y="1" width="7" height="1" fill="#F08018"/><rect x="8" y="1" width="1" height="1" fill="#8C8C8C"/><rect x="9" y="1" width="3" height="1" fill="#606060"/><rect x="0" y="2" width="12" height="1" fill="#606060"/><rect x="0" y="3" width="1" height="1" fill="#606060"/><rect x="1" y="3" width="10" height="1" fill="#D6D6D6"/><rect x="11" y="3" width="1" height="1" fill="#606060"/><rect x="0" y="4" width="1" height="1" fill="#606060"/><rect x="1" y="4" width="1" height="1" fill="#D6D6D6"/><rect x="2" y="4" width="3" height="1" fill="#000000"/><rect x="5" y="4" width="6" height="1" fill="#D6D6D6"/><rect x="11" y="4" width="1" height="1" fill="#606060"/><rect x="0" y="5" width="1" height="1" fill="#606060"/><rect x="1" y="5" width="1" height="1" fill="#D6D6D6"/><rect x="2" y="5" width="1" height="1" fill="#000000"/><rect x="3" y="5" width="1" height="1" fill="#FFFFFF"/><rect x="4" y="5" width="1" height="1" fill="#D6D6D6"/><rect x="5" y="5" width="6" height="1" fill="#000000"/><rect x="11" y="5" width="1" height="1" fill="#606060"/><rect x="0" y="6" width="1" height="1" fill="#606060"/><rect x="1" y="6" width="1" height="1" fill="#D6D6D6"/><rect x="2" y="6" width="1" height="1" fill="#000000"/><rect x="3" y="6" width="2" height="1" fill="#D6D6D6"/><rect x="5" y="6" width="2" height="1" fill="#000000"/><rect x="7" y="6" width="1" height="1" fill="#D6D6D6"/><rect x="8" y="6" width="2" height="1" fill="#000000"/><rect x="10" y="6" width="1" height="1" fill="#D6D6D6"/><rect x="11" y="6" width="1" height="1" fill="#606060"/><rect x="0" y="7" width="1" height="1" fill="#606060"/><rect x="1" y="7" width="1" height="1" fill="#D6D6D6"/><rect x="2" y="7" width="3" height="1" fill="#000000"/><rect x="5" y="7" width="6" height="1" fill="#D6D6D6"/><rect x="11" y="7" width="1" height="1" fill="#606060"/><rect x="0" y="8" width="1" height="1" fill="#606060"/><rect x="1" y="8" width="1" height="1" fill="#D6D6D6"/><rect x="2" y="8" width="1" height="1" fill="#000000"/><rect x="3" y="8" width="1" height="1" fill="#FFFFFF"/><rect x="4" y="8" width="1" height="1" fill="#D6D6D6"/><rect x="5" y="8" width="3" height="1" fill="#000000"/><rect x="8" y="8" width="1" height="1" fill="#D6D6D6"/><rect x="9" y="8" width="1" height="1" fill="#000000"/><rect x="10" y="8" width="1" height="1" fill="#D6D6D6"/><rect x="11" y="8" width="1" height="1" fill="#606060"/><rect x="0" y="9" width="1" height="1" fill="#606060"/><rect x="1" y="9" width="1" height="1" fill="#D6D6D6"/><rect x="2" y="9" width="1" height="1" fill="#000000"/><rect x="3" y="9" width="2" height="1" fill="#FFFFFF"/><rect x="5" y="9" width="6" height="1" fill="#D6D6D6"/><rect x="11" y="9" width="1" height="1" fill="#606060"/><rect x="0" y="10" width="12" height="1" fill="#606060"/></svg><svg class="a" style="left:603px;top:53px" width="16" height="16" shape-rendering="crispEdges"><rect x="0" y="0" width="15" height="1" fill="#606060"/><rect x="0" y="1" width="1" height="1" fill="#606060"/><rect x="1" y="1" width="5" height="1" fill="#F08018"/><rect x="6" y="1" width="8" height="1" fill="#E8E8E8"/><rect x="14" y="1" width="1" height="1" fill="#606060"/><rect x="15" y="1" width="1" height="1" fill="#B0A890"/><rect x="0" y="2" width="1" height="1" fill="#606060"/><rect x="1" y="2" width="1" height="1" fill="#000000"/><rect x="2" y="2" width="3" height="1" fill="#F08018"/><rect x="5" y="2" width="1" height="1" fill="#000000"/><rect x="6" y="2" width="8" height="1" fill="#E8E8E8"/><rect x="14" y="2" width="1" height="1" fill="#606060"/><rect x="15" y="2" width="1" height="1" fill="#B0A890"/><rect x="0" y="3" width="1" height="1" fill="#606060"/><rect x="1" y="3" width="13" height="1" fill="#E8E8E8"/><rect x="14" y="3" width="1" height="1" fill="#606060"/><rect x="15" y="3" width="1" height="1" fill="#B0A890"/><rect x="0" y="4" width="1" height="1" fill="#606060"/><rect x="1" y="4" width="2" height="1" fill="#E8E8E8"/><rect x="3" y="4" width="2" height="1" fill="#F08018"/><rect x="5" y="4" width="9" height="1" fill="#E8E8E8"/><rect x="14" y="4" width="1" height="1" fill="#606060"/><rect x="15" y="4" width="1" height="1" fill="#B0A890"/><rect x="0" y="5" width="1" height="1" fill="#606060"/><rect x="1" y="5" width="13" height="1" fill="#E8E8E8"/><rect x="14" y="5" width="1" height="1" fill="#606060"/><rect x="15" y="5" width="1" height="1" fill="#B0A890"/><rect x="0" y="6" width="1" height="1" fill="#606060"/><rect x="1" y="6" width="3" height="1" fill="#E8E8E8"/><rect x="4" y="6" width="1" height="1" fill="#E0E020"/><rect x="5" y="6" width="1" height="1" fill="#E8E8E8"/><rect x="6" y="6" width="2" height="1" fill="#606060"/><rect x="8" y="6" width="1" height="1" fill="#E8E8E8"/><rect x="9" y="6" width="3" height="1" fill="#4070E0"/><rect x="12" y="6" width="2" height="1" fill="#E8E8E8"/><rect x="14" y="6" width="1" height="1" fill="#606060"/><rect x="15" y="6" width="1" height="1" fill="#B0A890"/><rect x="0" y="7" width="1" height="1" fill="#606060"/><rect x="1" y="7" width="13" height="1" fill="#E8E8E8"/><rect x="14" y="7" width="1" height="1" fill="#606060"/><rect x="15" y="7" width="1" height="1" fill="#B0A890"/><rect x="0" y="8" width="1" height="1" fill="#606060"/><rect x="1" y="8" width="4" height="1" fill="#E8E8E8"/><rect x="5" y="8" width="1" height="1" fill="#20D020"/><rect x="6" y="8" width="1" height="1" fill="#E8E8E8"/><rect x="7" y="8" width="2" height="1" fill="#606060"/><rect x="9" y="8" width="1" height="1" fill="#E8E8E8"/><rect x="10" y="8" width="2" height="1" fill="#20D020"/><rect x="12" y="8" width="2" height="1" fill="#E8E8E8"/><rect x="14" y="8" width="1" height="1" fill="#606060"/><rect x="15" y="8" width="1" height="1" fill="#B0A890"/><rect x="0" y="9" width="1" height="1" fill="#606060"/><rect x="1" y="9" width="13" height="1" fill="#E8E8E8"/><rect x="14" y="9" width="1" height="1" fill="#606060"/><rect x="15" y="9" width="1" height="1" fill="#B0A890"/><rect x="0" y="10" width="1" height="1" fill="#606060"/><rect x="1" y="10" width="2" height="1" fill="#E8E8E8"/><rect x="3" y="10" width="2" height="1" fill="#606060"/><rect x="5" y="10" width="1" height="1" fill="#E8E8E8"/><rect x="6" y="10" width="1" height="1" fill="#4070E0"/><rect x="7" y="10" width="2" height="1" fill="#E8E8E8"/><rect x="9" y="10" width="2" height="1" fill="#E0E020"/><rect x="11" y="10" width="1" height="1" fill="#E8E8E8"/><rect x="12" y="10" width="1" height="1" fill="#4070E0"/><rect x="13" y="10" width="1" height="1" fill="#E8E8E8"/><rect x="14" y="10" width="1" height="1" fill="#606060"/><rect x="15" y="10" width="1" height="1" fill="#B0A890"/><rect x="0" y="11" width="1" height="1" fill="#606060"/><rect x="1" y="11" width="13" height="1" fill="#E8E8E8"/><rect x="14" y="11" width="1" height="1" fill="#606060"/><rect x="15" y="11" width="1" height="1" fill="#B0A890"/><rect x="0" y="12" width="1" height="1" fill="#606060"/><rect x="1" y="12" width="1" height="1" fill="#E8E8E8"/><rect x="2" y="12" width="1" height="1" fill="#E03020"/><rect x="3" y="12" width="11" height="1" fill="#E8E8E8"/><rect x="14" y="12" width="1" height="1" fill="#606060"/><rect x="15" y="12" width="1" height="1" fill="#B0A890"/><rect x="0" y="13" width="1" height="1" fill="#606060"/><rect x="1" y="13" width="13" height="1" fill="#E8E8E8"/><rect x="14" y="13" width="1" height="1" fill="#606060"/><rect x="15" y="13" width="1" height="1" fill="#B0A890"/><rect x="0" y="14" width="15" height="1" fill="#606060"/><rect x="15" y="14" width="1" height="1" fill="#B0A890"/><rect x="1" y="15" width="15" height="1" fill="#B0A890"/></svg><div class="a" style="left:4px;top:80px;width:329px;height:1px;background:#F4F0D8;"></div><div class="a" style="left:332px;top:80px;width:1px;height:492px;background:#F4F0D8;"></div><div class="a t" style="left:5px;top:84px;letter-spacing:-0.35px">Classes</div><svg class="a" style="left:305px;top:84px" width="8" height="9" shape-rendering="crispEdges"><rect x="2" y="0" width="6" height="1" fill="#000000"/><rect x="2" y="1" width="6" height="1" fill="#000000"/><rect x="2" y="2" width="1" height="1" fill="#000000"/><rect x="7" y="2" width="1" height="1" fill="#000000"/><rect x="0" y="3" width="6" height="1" fill="#000000"/><rect x="7" y="3" width="1" height="1" fill="#000000"/><rect x="0" y="4" width="6" height="1" fill="#000000"/><rect x="7" y="4" width="1" height="1" fill="#000000"/><rect x="0" y="5" width="1" height="1" fill="#000000"/><rect x="1" y="5" width="4" height="1" fill="#F7F3DA"/><rect x="5" y="5" width="3" height="1" fill="#000000"/><rect x="0" y="6" width="1" height="1" fill="#000000"/><rect x="1" y="6" width="4" height="1" fill="#F7F3DA"/><rect x="5" y="6" width="1" height="1" fill="#000000"/><rect x="0" y="7" width="1" height="1" fill="#000000"/><rect x="1" y="7" width="4" height="1" fill="#F7F3DA"/><rect x="5" y="7" width="1" height="1" fill="#000000"/><rect x="0" y="8" width="6" height="1" fill="#000000"/></svg><svg class="a" style="left:320px;top:85px" width="8" height="8" shape-rendering="crispEdges"><rect x="0" y="0" width="2" height="1" fill="#000000"/><rect x="6" y="0" width="2" height="1" fill="#000000"/><rect x="1" y="1" width="2" height="1" fill="#000000"/><rect x="5" y="1" width="2" height="1" fill="#000000"/><rect x="2" y="2" width="4" height="1" fill="#000000"/><rect x="3" y="3" width="2" height="1" fill="#000000"/><rect x="3" y="4" width="2" height="1" fill="#000000"/><rect x="2" y="5" width="4" height="1" fill="#000000"/><rect x="1" y="6" width="2" height="1" fill="#000000"/><rect x="5" y="6" width="2" height="1" fill="#000000"/><rect x="0" y="7" width="2" height="1" fill="#000000"/><rect x="6" y="7" width="2" height="1" fill="#000000"/></svg><div class="a" style="left:4px;top:99px;width:329px;height:1px;background:#C9B84E;"></div><div class="a" style="left:6px;top:100px;width:106px;height:1px;background:#F4F0D8;"></div><div class="a" style="left:4px;top:102px;width:1px;height:19px;background:#F4F0D8;"></div><div class="a" style="left:5px;top:101px;width:1px;height:1px;background:#F4F0D8;"></div><div class="a" style="left:111px;top:102px;width:1px;height:19px;background:#C9B84E;"></div><div class="a" style="left:112px;top:101px;width:1px;height:20px;background:#000000;"></div><div class="a t" style="left:29px;top:105px;letter-spacing:-0.35px">GUI Classes</div><div class="a" style="left:113px;top:102px;width:107px;height:1px;background:#F4F0D8;"></div><div class="a" style="left:219px;top:103px;width:1px;height:17px;background:#C9B84E;"></div><div class="a" style="left:220px;top:103px;width:1px;height:18px;background:#000000;"></div><div class="a t" style="left:142px;top:106px;">Properties</div><div class="a" style="left:113px;top:120px;width:220px;height:1px;background:#F4F0D8;"></div><div class="a" style="left:6px;top:124px;width:326px;height:1px;background:#C9B84E;"></div><div class="a" style="left:6px;top:124px;width:1px;height:423px;background:#C9B84E;"></div><div class="a" style="left:7px;top:125px;width:170px;height:20px;background:#E9E2B4;"></div><div class="a" style="left:7px;top:125px;width:170px;height:1px;background:#F4F0D8;"></div><div class="a" style="left:7px;top:125px;width:1px;height:19px;background:#F4F0D8;"></div><div class="a" style="left:175px;top:126px;width:1px;height:18px;background:#C9B84E;"></div><div class="a" style="left:176px;top:125px;width:1px;height:20px;background:#000000;"></div><div class="a" style="left:7px;top:143px;width:170px;height:1px;background:#C9B84E;"></div><div class="a" style="left:7px;top:144px;width:170px;height:1px;background:#000000;"></div><div class="a t" style="left:11px;top:130px;">Name</div><div class="a" style="left:177px;top:125px;width:80px;height:20px;background:#E9E2B4;"></div><div class="a" style="left:177px;top:125px;width:80px;height:1px;background:#F4F0D8;"></div><div class="a" style="left:177px;top:125px;width:1px;height:19px;background:#F4F0D8;"></div><div class="a" style="left:255px;top:126px;width:1px;height:18px;background:#C9B84E;"></div><div class="a" style="left:256px;top:125px;width:1px;height:20px;background:#000000;"></div><div class="a" style="left:177px;top:143px;width:80px;height:1px;background:#C9B84E;"></div><div class="a" style="left:177px;top:144px;width:80px;height:1px;background:#000000;"></div><div class="a t" style="left:180px;top:130px;">Context class</div><div class="a" style="left:257px;top:125px;width:60px;height:20px;background:#E9E2B4;"></div><div class="a" style="left:257px;top:125px;width:60px;height:1px;background:#F4F0D8;"></div><div class="a" style="left:257px;top:125px;width:1px;height:19px;background:#F4F0D8;"></div><div class="a" style="left:315px;top:126px;width:1px;height:18px;background:#C9B84E;"></div><div class="a" style="left:316px;top:125px;width:1px;height:20px;background:#000000;"></div><div class="a" style="left:257px;top:143px;width:60px;height:1px;background:#C9B84E;"></div><div class="a" style="left:257px;top:144px;width:60px;height:1px;background:#000000;"></div><div class="a t" style="left:260px;top:130px;">Class</div><div class="a" style="left:7px;top:145px;width:310px;height:402px;background:#FFFFFF;"></div><div class="a" style="left:317px;top:137px;width:12px;height:410px;background:#E9E2B4;background-image:repeating-conic-gradient(#F7F3DA 0 25%,#E9E2B4 0 50%);background-size:2px 2px"></div><div class="a" style="left:317px;top:125px;width:12px;height:12px;background:#E9E2B4;"></div><div class="a" style="left:317px;top:125px;width:12px;height:1px;background:#F4F0D8;"></div><div class="a" style="left:317px;top:125px;width:1px;height:12px;background:#F4F0D8;"></div><div class="a" style="left:317px;top:136px;width:12px;height:1px;background:#000000;"></div><div class="a" style="left:328px;top:125px;width:1px;height:12px;background:#000000;"></div><div class="a" style="left:318px;top:135px;width:10px;height:1px;background:#C9B84E;"></div><div class="a" style="left:327px;top:126px;width:1px;height:10px;background:#C9B84E;"></div><svg class="a" style="left:317px;top:125px" width="12" height="12" shape-rendering="crispEdges"><path d="M3 7 H8 L5.5 4.5 Z" fill="#000" shape-rendering="auto"/></svg><div class="a" style="left:317px;top:261px;width:12px;height:182px;background:#E9E2B4;"></div><div class="a" style="left:317px;top:261px;width:12px;height:1px;background:#F4F0D8;"></div><div class="a" style="left:317px;top:261px;width:1px;height:182px;background:#F4F0D8;"></div><div class="a" style="left:317px;top:442px;width:12px;height:1px;background:#000000;"></div><div class="a" style="left:328px;top:261px;width:1px;height:182px;background:#000000;"></div><div class="a" style="left:318px;top:441px;width:10px;height:1px;background:#C9B84E;"></div><div class="a" style="left:327px;top:262px;width:1px;height:180px;background:#C9B84E;"></div><div class="a" style="left:317px;top:535px;width:12px;height:12px;background:#E9E2B4;"></div><div class="a" style="left:317px;top:535px;width:12px;height:1px;background:#F4F0D8;"></div><div class="a" style="left:317px;top:535px;width:1px;height:12px;background:#F4F0D8;"></div><div class="a" style="left:317px;top:546px;width:12px;height:1px;background:#000000;"></div><div class="a" style="left:328px;top:535px;width:1px;height:12px;background:#000000;"></div><div class="a" style="left:318px;top:545px;width:10px;height:1px;background:#C9B84E;"></div><div class="a" style="left:327px;top:536px;width:1px;height:10px;background:#C9B84E;"></div><svg class="a" style="left:317px;top:535px" width="12" height="12" shape-rendering="crispEdges"><path d="M3 5 H8 L5.5 7.5 Z" fill="#000" shape-rendering="auto"/></svg><div class="a" style="left:7px;top:145px;width:310px;height:402px;overflow:hidden"><div class="a" style="left:-7px;top:-145px;width:841px;height:576px"><div class="a" style="left:17px;top:145px;width:1px;height:400px;background:repeating-linear-gradient(to bottom,#C8B45A 0 1px,transparent 1px 2px)"></div><div class="a" style="left:37px;top:145px;width:1px;height:8px;background:repeating-linear-gradient(to bottom,#C8B45A 0 1px,transparent 1px 2px)"></div><div class="a" style="left:37px;top:202px;width:1px;height:21px;background:repeating-linear-gradient(to bottom,#C8B45A 0 1px,transparent 1px 2px)"></div><div class="a" style="left:57px;top:228px;width:1px;height:163px;background:repeating-linear-gradient(to bottom,#C8B45A 0 1px,transparent 1px 2px)"></div><div class="a" style="left:77px;top:242px;width:1px;height:51px;background:repeating-linear-gradient(to bottom,#C8B45A 0 1px,transparent 1px 2px)"></div><div class="a" style="left:43px;top:152px;width:3px;height:1px;background:repeating-linear-gradient(to right,#C8B45A 0 1px,transparent 1px 2px)"></div><div class="a" style="left:33px;top:148px;width:9px;height:9px;border:1px solid #C9B84E;background:#fff;box-sizing:border-box"></div><div class="a" style="left:35px;top:152px;width:5px;height:1px;background:#000"></div><div class="a" style="left:37px;top:150px;width:1px;height:5px;background:#000"></div><!--icon ctl--><svg class="a" style="left:50px;top:145px" width="16" height="14" shape-rendering="crispEdges"><rect x="0" y="0" width="1" height="1" fill="#8C8C8C"/><rect x="15" y="0" width="1" height="1" fill="#8C8C8C"/><rect x="0" y="1" width="1" height="1" fill="#8C8C8C"/><rect x="15" y="1" width="1" height="1" fill="#8C8C8C"/><rect x="0" y="2" width="16" height="1" fill="#8C8C8C"/><rect x="0" y="3" width="1" height="1" fill="#8C8C8C"/><rect x="6" y="3" width="2" height="1" fill="#8C8C8C"/><rect x="15" y="3" width="1" height="1" fill="#8C8C8C"/><rect x="0" y="4" width="16" height="1" fill="#8C8C8C"/><rect x="0" y="5" width="1" height="1" fill="#8C8C8C"/><rect x="1" y="5" width="14" height="1" fill="#D6D6D6"/><rect x="15" y="5" width="1" height="1" fill="#8C8C8C"/><rect x="0" y="6" width="1" height="1" fill="#8C8C8C"/><rect x="1" y="6" width="1" height="1" fill="#D6D6D6"/><rect x="2" y="6" width="4" height="1" fill="#000000"/><rect x="6" y="6" width="2" height="1" fill="#D6D6D6"/><rect x="8" y="6" width="1" height="1" fill="#000000"/><rect x="9" y="6" width="1" height="1" fill="#D6D6D6"/><rect x="10" y="6" width="4" height="1" fill="#000000"/><rect x="14" y="6" width="1" height="1" fill="#D6D6D6"/><rect x="15" y="6" width="1" height="1" fill="#8C8C8C"/><rect x="0" y="7" width="1" height="1" fill="#8C8C8C"/><rect x="1" y="7" width="1" height="1" fill="#D6D6D6"/><rect x="2" y="7" width="1" height="1" fill="#000000"/><rect x="3" y="7" width="1" height="1" fill="#FFFFFF"/><rect x="4" y="7" width="1" height="1" fill="#F08018"/><rect x="5" y="7" width="1" height="1" fill="#FFFFFF"/><rect x="6" y="7" width="9" height="1" fill="#D6D6D6"/><rect x="15" y="7" width="1" height="1" fill="#8C8C8C"/><rect x="0" y="8" width="1" height="1" fill="#8C8C8C"/><rect x="1" y="8" width="1" height="1" fill="#D6D6D6"/><rect x="2" y="8" width="1" height="1" fill="#000000"/><rect x="3" y="8" width="3" height="1" fill="#FFFFFF"/><rect x="6" y="8" width="2" height="1" fill="#D6D6D6"/><rect x="8" y="8" width="2" height="1" fill="#000000"/><rect x="10" y="8" width="1" height="1" fill="#D6D6D6"/><rect x="11" y="8" width="3" height="1" fill="#000000"/><rect x="14" y="8" width="1" height="1" fill="#D6D6D6"/><rect x="15" y="8" width="1" height="1" fill="#8C8C8C"/><rect x="0" y="9" width="1" height="1" fill="#8C8C8C"/><rect x="1" y="9" width="1" height="1" fill="#D6D6D6"/><rect x="2" y="9" width="4" height="1" fill="#000000"/><rect x="6" y="9" width="9" height="1" fill="#D6D6D6"/><rect x="15" y="9" width="1" height="1" fill="#8C8C8C"/><rect x="0" y="10" width="1" height="1" fill="#8C8C8C"/><rect x="1" y="10" width="1" height="1" fill="#D6D6D6"/><rect x="2" y="10" width="1" height="1" fill="#000000"/><rect x="3" y="10" width="3" height="1" fill="#FFFFFF"/><rect x="6" y="10" width="2" height="1" fill="#D6D6D6"/><rect x="8" y="10" width="4" height="1" fill="#000000"/><rect x="12" y="10" width="1" height="1" fill="#D6D6D6"/><rect x="13" y="10" width="1" height="1" fill="#000000"/><rect x="14" y="10" width="1" height="1" fill="#D6D6D6"/><rect x="15" y="10" width="1" height="1" fill="#8C8C8C"/><rect x="0" y="11" width="1" height="1" fill="#8C8C8C"/><rect x="1" y="11" width="1" height="1" fill="#D6D6D6"/><rect x="2" y="11" width="1" height="1" fill="#000000"/><rect x="3" y="11" width="3" height="1" fill="#F08018"/><rect x="6" y="11" width="9" height="1" fill="#D6D6D6"/><rect x="15" y="11" width="1" height="1" fill="#8C8C8C"/><rect x="0" y="12" width="1" height="1" fill="#8C8C8C"/><rect x="1" y="12" width="1" height="1" fill="#D6D6D6"/><rect x="2" y="12" width="1" height="1" fill="#000000"/><rect x="3" y="12" width="3" height="1" fill="#FFFFFF"/><rect x="6" y="12" width="2" height="1" fill="#D6D6D6"/><rect x="8" y="12" width="1" height="1" fill="#000000"/><rect x="9" y="12" width="1" height="1" fill="#D6D6D6"/><rect x="10" y="12" width="3" height="1" fill="#000000"/><rect x="13" y="12" width="2" height="1" fill="#D6D6D6"/><rect x="15" y="12" width="1" height="1" fill="#8C8C8C"/><rect x="0" y="13" width="16" height="1" fill="#8C8C8C"/></svg><div class="a t" style="left:72px;top:145px;line-height:14px;color:#760076;font-weight:bold;letter-spacing:0.35px;-webkit-text-stroke:0">Controls</div><div class="a" style="left:23px;top:166px;width:3px;height:1px;background:repeating-linear-gradient(to right,#C8B45A 0 1px,transparent 1px 2px)"></div><div class="a" style="left:13px;top:162px;width:9px;height:9px;border:1px solid #C9B84E;background:#fff;box-sizing:border-box"></div><div class="a" style="left:15px;top:166px;width:5px;height:1px;background:#000"></div><div class="a" style="left:17px;top:164px;width:1px;height:5px;background:#000"></div><div class="a t" style="left:30px;top:159px;line-height:14px;color:#000;font-weight:normal;">ODC_Option</div><div class="a" style="left:23px;top:180px;width:3px;height:1px;background:repeating-linear-gradient(to right,#C8B45A 0 1px,transparent 1px 2px)"></div><div class="a" style="left:13px;top:176px;width:9px;height:9px;border:1px solid #C9B84E;background:#fff;box-sizing:border-box"></div><div class="a" style="left:15px;top:180px;width:5px;height:1px;background:#000"></div><div class="a" style="left:17px;top:178px;width:1px;height:5px;background:#000"></div><div class="a t" style="left:30px;top:173px;line-height:14px;color:#000;font-weight:normal;">ODC_Options</div><div class="a" style="left:23px;top:194px;width:3px;height:1px;background:repeating-linear-gradient(to right,#C8B45A 0 1px,transparent 1px 2px)"></div><div class="a" style="left:13px;top:190px;width:9px;height:9px;border:1px solid #C9B84E;background:#fff;box-sizing:border-box"></div><div class="a" style="left:15px;top:194px;width:5px;height:1px;background:#000"></div><div class="a t" style="left:30px;top:187px;line-height:14px;color:#000;font-weight:normal;">Person</div><div class="a" style="left:43px;top:208px;width:3px;height:1px;background:repeating-linear-gradient(to right,#C8B45A 0 1px,transparent 1px 2px)"></div><div class="a" style="left:33px;top:204px;width:9px;height:9px;border:1px solid #C9B84E;background:#fff;box-sizing:border-box"></div><div class="a" style="left:35px;top:208px;width:5px;height:1px;background:#000"></div><div class="a" style="left:37px;top:206px;width:1px;height:5px;background:#000"></div><!--icon win--><svg class="a" style="left:50px;top:201px" width="16" height="14" shape-rendering="crispEdges"><rect x="0" y="0" width="1" height="1" fill="#8C8C8C"/><rect x="1" y="0" width="10" height="1" fill="#F08018"/><rect x="11" y="0" width="1" height="1" fill="#8C8C8C"/><rect x="12" y="0" width="1" height="1" fill="#606060"/><rect x="13" y="0" width="1" height="1" fill="#8C8C8C"/><rect x="14" y="0" width="1" height="1" fill="#606060"/><rect x="15" y="0" width="1" height="1" fill="#8C8C8C"/><rect x="0" y="1" width="1" height="1" fill="#8C8C8C"/><rect x="1" y="1" width="10" height="1" fill="#F08018"/><rect x="11" y="1" width="1" height="1" fill="#606060"/><rect x="12" y="1" width="1" height="1" fill="#8C8C8C"/><rect x="13" y="1" width="1" height="1" fill="#606060"/><rect x="14" y="1" width="2" height="1" fill="#8C8C8C"/><rect x="0" y="2" width="16" height="1" fill="#8C8C8C"/><rect x="0" y="3" width="1" height="1" fill="#8C8C8C"/><rect x="6" y="3" width="2" height="1" fill="#8C8C8C"/><rect x="15" y="3" width="1" height="1" fill="#8C8C8C"/><rect x="0" y="4" width="16" height="1" fill="#8C8C8C"/><rect x="0" y="5" width="1" height="1" fill="#8C8C8C"/><rect x="1" y="5" width="14" height="1" fill="#D6D6D6"/><rect x="15" y="5" width="1" height="1" fill="#8C8C8C"/><rect x="0" y="6" width="1" height="1" fill="#8C8C8C"/><rect x="1" y="6" width="1" height="1" fill="#D6D6D6"/><rect x="2" y="6" width="4" height="1" fill="#000000"/><rect x="6" y="6" width="2" height="1" fill="#D6D6D6"/><rect x="8" y="6" width="1" height="1" fill="#000000"/><rect x="9" y="6" width="1" height="1" fill="#D6D6D6"/><rect x="10" y="6" width="4" height="1" fill="#000000"/><rect x="14" y="6" width="1" height="1" fill="#D6D6D6"/><rect x="15" y="6" width="1" height="1" fill="#8C8C8C"/><rect x="0" y="7" width="1" height="1" fill="#8C8C8C"/><rect x="1" y="7" width="1" height="1" fill="#D6D6D6"/><rect x="2" y="7" width="1" height="1" fill="#000000"/><rect x="3" y="7" width="3" height="1" fill="#FFFFFF"/><rect x="6" y="7" width="9" height="1" fill="#D6D6D6"/><rect x="15" y="7" width="1" height="1" fill="#8C8C8C"/><rect x="0" y="8" width="1" height="1" fill="#8C8C8C"/><rect x="1" y="8" width="1" height="1" fill="#D6D6D6"/><rect x="2" y="8" width="1" height="1" fill="#000000"/><rect x="3" y="8" width="3" height="1" fill="#FFFFFF"/><rect x="6" y="8" width="2" height="1" fill="#D6D6D6"/><rect x="8" y="8" width="2" height="1" fill="#000000"/><rect x="10" y="8" width="1" height="1" fill="#D6D6D6"/><rect x="11" y="8" width="3" height="1" fill="#000000"/><rect x="14" y="8" width="1" height="1" fill="#D6D6D6"/><rect x="15" y="8" width="1" height="1" fill="#8C8C8C"/><rect x="0" y="9" width="1" height="1" fill="#8C8C8C"/><rect x="1" y="9" width="1" height="1" fill="#D6D6D6"/><rect x="2" y="9" width="4" height="1" fill="#000000"/><rect x="6" y="9" width="9" height="1" fill="#D6D6D6"/><rect x="15" y="9" width="1" height="1" fill="#8C8C8C"/><rect x="0" y="10" width="1" height="1" fill="#8C8C8C"/><rect x="1" y="10" width="1" height="1" fill="#D6D6D6"/><rect x="2" y="10" width="1" height="1" fill="#000000"/><rect x="3" y="10" width="3" height="1" fill="#FFFFFF"/><rect x="6" y="10" width="2" height="1" fill="#D6D6D6"/><rect x="8" y="10" width="4" height="1" fill="#000000"/><rect x="12" y="10" width="1" height="1" fill="#D6D6D6"/><rect x="13" y="10" width="1" height="1" fill="#000000"/><rect x="14" y="10" width="1" height="1" fill="#D6D6D6"/><rect x="15" y="10" width="1" height="1" fill="#8C8C8C"/><rect x="0" y="11" width="1" height="1" fill="#8C8C8C"/><rect x="1" y="11" width="1" height="1" fill="#D6D6D6"/><rect x="2" y="11" width="1" height="1" fill="#000000"/><rect x="3" y="11" width="3" height="1" fill="#FFFFFF"/><rect x="6" y="11" width="9" height="1" fill="#D6D6D6"/><rect x="15" y="11" width="1" height="1" fill="#8C8C8C"/><rect x="0" y="12" width="1" height="1" fill="#8C8C8C"/><rect x="1" y="12" width="1" height="1" fill="#D6D6D6"/><rect x="2" y="12" width="1" height="1" fill="#000000"/><rect x="3" y="12" width="3" height="1" fill="#FFFFFF"/><rect x="6" y="12" width="2" height="1" fill="#D6D6D6"/><rect x="8" y="12" width="1" height="1" fill="#000000"/><rect x="9" y="12" width="1" height="1" fill="#D6D6D6"/><rect x="10" y="12" width="3" height="1" fill="#000000"/><rect x="13" y="12" width="2" height="1" fill="#D6D6D6"/><rect x="15" y="12" width="1" height="1" fill="#8C8C8C"/><rect x="0" y="13" width="16" height="1" fill="#8C8C8C"/></svg><div class="a t" style="left:72px;top:201px;line-height:14px;color:#760076;font-weight:bold;letter-spacing:0.35px;-webkit-text-stroke:0">Windows</div><div class="a" style="left:43px;top:222px;width:3px;height:1px;background:repeating-linear-gradient(to right,#C8B45A 0 1px,transparent 1px 2px)"></div><div class="a" style="left:33px;top:218px;width:9px;height:9px;border:1px solid #C9B84E;background:#fff;box-sizing:border-box"></div><div class="a" style="left:35px;top:222px;width:5px;height:1px;background:#000"></div><!--icon ctl--><svg class="a" style="left:50px;top:215px" width="16" height="14" shape-rendering="crispEdges"><rect x="0" y="0" width="1" height="1" fill="#8C8C8C"/><rect x="15" y="0" width="1" height="1" fill="#8C8C8C"/><rect x="0" y="1" width="1" height="1" fill="#8C8C8C"/><rect x="15" y="1" width="1" height="1" fill="#8C8C8C"/><rect x="0" y="2" width="16" height="1" fill="#8C8C8C"/><rect x="0" y="3" width="1" height="1" fill="#8C8C8C"/><rect x="6" y="3" width="2" height="1" fill="#8C8C8C"/><rect x="15" y="3" width="1" height="1" fill="#8C8C8C"/><rect x="0" y="4" width="16" height="1" fill="#8C8C8C"/><rect x="0" y="5" width="1" height="1" fill="#8C8C8C"/><rect x="1" y="5" width="14" height="1" fill="#D6D6D6"/><rect x="15" y="5" width="1" height="1" fill="#8C8C8C"/><rect x="0" y="6" width="1" height="1" fill="#8C8C8C"/><rect x="1" y="6" width="1" height="1" fill="#D6D6D6"/><rect x="2" y="6" width="4" height="1" fill="#000000"/><rect x="6" y="6" width="2" height="1" fill="#D6D6D6"/><rect x="8" y="6" width="1" height="1" fill="#000000"/><rect x="9" y="6" width="1" height="1" fill="#D6D6D6"/><rect x="10" y="6" width="4" height="1" fill="#000000"/><rect x="14" y="6" width="1" height="1" fill="#D6D6D6"/><rect x="15" y="6" width="1" height="1" fill="#8C8C8C"/><rect x="0" y="7" width="1" height="1" fill="#8C8C8C"/><rect x="1" y="7" width="1" height="1" fill="#D6D6D6"/><rect x="2" y="7" width="1" height="1" fill="#000000"/><rect x="3" y="7" width="1" height="1" fill="#FFFFFF"/><rect x="4" y="7" width="1" height="1" fill="#F08018"/><rect x="5" y="7" width="1" height="1" fill="#FFFFFF"/><rect x="6" y="7" width="9" height="1" fill="#D6D6D6"/><rect x="15" y="7" width="1" height="1" fill="#8C8C8C"/><rect x="0" y="8" width="1" height="1" fill="#8C8C8C"/><rect x="1" y="8" width="1" height="1" fill="#D6D6D6"/><rect x="2" y="8" width="1" height="1" fill="#000000"/><rect x="3" y="8" width="3" height="1" fill="#FFFFFF"/><rect x="6" y="8" width="2" height="1" fill="#D6D6D6"/><rect x="8" y="8" width="2" height="1" fill="#000000"/><rect x="10" y="8" width="1" height="1" fill="#D6D6D6"/><rect x="11" y="8" width="3" height="1" fill="#000000"/><rect x="14" y="8" width="1" height="1" fill="#D6D6D6"/><rect x="15" y="8" width="1" height="1" fill="#8C8C8C"/><rect x="0" y="9" width="1" height="1" fill="#8C8C8C"/><rect x="1" y="9" width="1" height="1" fill="#D6D6D6"/><rect x="2" y="9" width="4" height="1" fill="#000000"/><rect x="6" y="9" width="9" height="1" fill="#D6D6D6"/><rect x="15" y="9" width="1" height="1" fill="#8C8C8C"/><rect x="0" y="10" width="1" height="1" fill="#8C8C8C"/><rect x="1" y="10" width="1" height="1" fill="#D6D6D6"/><rect x="2" y="10" width="1" height="1" fill="#000000"/><rect x="3" y="10" width="3" height="1" fill="#FFFFFF"/><rect x="6" y="10" width="2" height="1" fill="#D6D6D6"/><rect x="8" y="10" width="4" height="1" fill="#000000"/><rect x="12" y="10" width="1" height="1" fill="#D6D6D6"/><rect x="13" y="10" width="1" height="1" fill="#000000"/><rect x="14" y="10" width="1" height="1" fill="#D6D6D6"/><rect x="15" y="10" width="1" height="1" fill="#8C8C8C"/><rect x="0" y="11" width="1" height="1" fill="#8C8C8C"/><rect x="1" y="11" width="1" height="1" fill="#D6D6D6"/><rect x="2" y="11" width="1" height="1" fill="#000000"/><rect x="3" y="11" width="3" height="1" fill="#F08018"/><rect x="6" y="11" width="9" height="1" fill="#D6D6D6"/><rect x="15" y="11" width="1" height="1" fill="#8C8C8C"/><rect x="0" y="12" width="1" height="1" fill="#8C8C8C"/><rect x="1" y="12" width="1" height="1" fill="#D6D6D6"/><rect x="2" y="12" width="1" height="1" fill="#000000"/><rect x="3" y="12" width="3" height="1" fill="#FFFFFF"/><rect x="6" y="12" width="2" height="1" fill="#D6D6D6"/><rect x="8" y="12" width="1" height="1" fill="#000000"/><rect x="9" y="12" width="1" height="1" fill="#D6D6D6"/><rect x="10" y="12" width="3" height="1" fill="#000000"/><rect x="13" y="12" width="2" height="1" fill="#D6D6D6"/><rect x="15" y="12" width="1" height="1" fill="#8C8C8C"/><rect x="0" y="13" width="16" height="1" fill="#8C8C8C"/></svg><div class="a t" style="left:72px;top:215px;line-height:14px;color:#760076;font-weight:bold;letter-spacing:0.35px;-webkit-text-stroke:0">Controls</div><div class="a" style="left:63px;top:236px;width:3px;height:1px;background:repeating-linear-gradient(to right,#C8B45A 0 1px,transparent 1px 2px)"></div><div class="a" style="left:53px;top:232px;width:9px;height:9px;border:1px solid #C9B84E;background:#fff;box-sizing:border-box"></div><div class="a" style="left:55px;top:236px;width:5px;height:1px;background:#000"></div><div class="a" style="left:67px;top:229px;width:250px;height:14px;background:#008080"></div><!--icon ctl--><svg class="a" style="left:70px;top:229px" width="16" height="14" shape-rendering="crispEdges"><rect x="0" y="0" width="1" height="1" fill="#8C8C8C"/><rect x="15" y="0" width="1" height="1" fill="#8C8C8C"/><rect x="0" y="1" width="1" height="1" fill="#8C8C8C"/><rect x="15" y="1" width="1" height="1" fill="#8C8C8C"/><rect x="0" y="2" width="16" height="1" fill="#8C8C8C"/><rect x="0" y="3" width="1" height="1" fill="#8C8C8C"/><rect x="6" y="3" width="2" height="1" fill="#8C8C8C"/><rect x="15" y="3" width="1" height="1" fill="#8C8C8C"/><rect x="0" y="4" width="16" height="1" fill="#8C8C8C"/><rect x="0" y="5" width="1" height="1" fill="#8C8C8C"/><rect x="1" y="5" width="14" height="1" fill="#D6D6D6"/><rect x="15" y="5" width="1" height="1" fill="#8C8C8C"/><rect x="0" y="6" width="1" height="1" fill="#8C8C8C"/><rect x="1" y="6" width="1" height="1" fill="#D6D6D6"/><rect x="2" y="6" width="4" height="1" fill="#000000"/><rect x="6" y="6" width="2" height="1" fill="#D6D6D6"/><rect x="8" y="6" width="1" height="1" fill="#000000"/><rect x="9" y="6" width="1" height="1" fill="#D6D6D6"/><rect x="10" y="6" width="4" height="1" fill="#000000"/><rect x="14" y="6" width="1" height="1" fill="#D6D6D6"/><rect x="15" y="6" width="1" height="1" fill="#8C8C8C"/><rect x="0" y="7" width="1" height="1" fill="#8C8C8C"/><rect x="1" y="7" width="1" height="1" fill="#D6D6D6"/><rect x="2" y="7" width="1" height="1" fill="#000000"/><rect x="3" y="7" width="1" height="1" fill="#FFFFFF"/><rect x="4" y="7" width="1" height="1" fill="#F08018"/><rect x="5" y="7" width="1" height="1" fill="#FFFFFF"/><rect x="6" y="7" width="9" height="1" fill="#D6D6D6"/><rect x="15" y="7" width="1" height="1" fill="#8C8C8C"/><rect x="0" y="8" width="1" height="1" fill="#8C8C8C"/><rect x="1" y="8" width="1" height="1" fill="#D6D6D6"/><rect x="2" y="8" width="1" height="1" fill="#000000"/><rect x="3" y="8" width="3" height="1" fill="#FFFFFF"/><rect x="6" y="8" width="2" height="1" fill="#D6D6D6"/><rect x="8" y="8" width="2" height="1" fill="#000000"/><rect x="10" y="8" width="1" height="1" fill="#D6D6D6"/><rect x="11" y="8" width="3" height="1" fill="#000000"/><rect x="14" y="8" width="1" height="1" fill="#D6D6D6"/><rect x="15" y="8" width="1" height="1" fill="#8C8C8C"/><rect x="0" y="9" width="1" height="1" fill="#8C8C8C"/><rect x="1" y="9" width="1" height="1" fill="#D6D6D6"/><rect x="2" y="9" width="4" height="1" fill="#000000"/><rect x="6" y="9" width="9" height="1" fill="#D6D6D6"/><rect x="15" y="9" width="1" height="1" fill="#8C8C8C"/><rect x="0" y="10" width="1" height="1" fill="#8C8C8C"/><rect x="1" y="10" width="1" height="1" fill="#D6D6D6"/><rect x="2" y="10" width="1" height="1" fill="#000000"/><rect x="3" y="10" width="3" height="1" fill="#FFFFFF"/><rect x="6" y="10" width="2" height="1" fill="#D6D6D6"/><rect x="8" y="10" width="4" height="1" fill="#000000"/><rect x="12" y="10" width="1" height="1" fill="#D6D6D6"/><rect x="13" y="10" width="1" height="1" fill="#000000"/><rect x="14" y="10" width="1" height="1" fill="#D6D6D6"/><rect x="15" y="10" width="1" height="1" fill="#8C8C8C"/><rect x="0" y="11" width="1" height="1" fill="#8C8C8C"/><rect x="1" y="11" width="1" height="1" fill="#D6D6D6"/><rect x="2" y="11" width="1" height="1" fill="#000000"/><rect x="3" y="11" width="3" height="1" fill="#F08018"/><rect x="6" y="11" width="9" height="1" fill="#D6D6D6"/><rect x="15" y="11" width="1" height="1" fill="#8C8C8C"/><rect x="0" y="12" width="1" height="1" fill="#8C8C8C"/><rect x="1" y="12" width="1" height="1" fill="#D6D6D6"/><rect x="2" y="12" width="1" height="1" fill="#000000"/><rect x="3" y="12" width="3" height="1" fill="#FFFFFF"/><rect x="6" y="12" width="2" height="1" fill="#D6D6D6"/><rect x="8" y="12" width="1" height="1" fill="#000000"/><rect x="9" y="12" width="1" height="1" fill="#D6D6D6"/><rect x="10" y="12" width="3" height="1" fill="#000000"/><rect x="13" y="12" width="2" height="1" fill="#D6D6D6"/><rect x="15" y="12" width="1" height="1" fill="#8C8C8C"/><rect x="0" y="13" width="16" height="1" fill="#8C8C8C"/><rect x="0" y="0" width="16" height="14" fill="#008080" opacity="0.5"/></svg><div class="a t" style="left:92px;top:229px;line-height:14px;color:#fff;font-weight:normal;">edit_properties</div><div class="a t" style="left:261px;top:229px;line-height:14px;color:#fff">Person</div><div class="a" style="left:177px;top:229px;width:80px;height:1px;background:repeating-linear-gradient(to right,#FF7F7F 0 1px,transparent 1px 2px)"></div><div class="a" style="left:177px;top:242px;width:80px;height:1px;background:repeating-linear-gradient(to right,#FF7F7F 0 1px,transparent 1px 2px)"></div><div class="a" style="left:177px;top:229px;width:1px;height:14px;background:repeating-linear-gradient(to bottom,#FF7F7F 0 1px,transparent 1px 2px)"></div><div class="a" style="left:256px;top:230px;width:1px;height:13px;background:repeating-linear-gradient(to bottom,#FF7F7F 0 1px,transparent 1px 2px)"></div><div class="a" style="left:79px;top:250px;width:7px;height:1px;background:repeating-linear-gradient(to right,#C8B45A 0 1px,transparent 1px 2px)"></div><!--icon fields--><svg class="a" style="left:90px;top:243px" width="16" height="14" shape-rendering="crispEdges"><rect x="0" y="0" width="16" height="1" fill="#606060"/><rect x="0" y="1" width="1" height="1" fill="#606060"/><rect x="1" y="1" width="9" height="1" fill="#F08018"/><rect x="10" y="1" width="1" height="1" fill="#606060"/><rect x="11" y="1" width="1" height="1" fill="#FFFFFF"/><rect x="12" y="1" width="1" height="1" fill="#606060"/><rect x="13" y="1" width="1" height="1" fill="#FFFFFF"/><rect x="14" y="1" width="2" height="1" fill="#606060"/><rect x="0" y="2" width="1" height="1" fill="#606060"/><rect x="1" y="2" width="9" height="1" fill="#F08018"/><rect x="10" y="2" width="6" height="1" fill="#606060"/><rect x="0" y="3" width="16" height="1" fill="#606060"/><rect x="0" y="4" width="1" height="1" fill="#606060"/><rect x="1" y="4" width="14" height="1" fill="#D6D6D6"/><rect x="15" y="4" width="1" height="1" fill="#606060"/><rect x="0" y="5" width="1" height="1" fill="#606060"/><rect x="1" y="5" width="14" height="1" fill="#D6D6D6"/><rect x="15" y="5" width="1" height="1" fill="#606060"/><rect x="0" y="6" width="1" height="1" fill="#606060"/><rect x="1" y="6" width="14" height="1" fill="#D6D6D6"/><rect x="15" y="6" width="1" height="1" fill="#606060"/><rect x="0" y="7" width="1" height="1" fill="#606060"/><rect x="1" y="7" width="14" height="1" fill="#D6D6D6"/><rect x="15" y="7" width="1" height="1" fill="#606060"/><rect x="0" y="8" width="1" height="1" fill="#606060"/><rect x="1" y="8" width="14" height="1" fill="#D6D6D6"/><rect x="15" y="8" width="1" height="1" fill="#606060"/><rect x="0" y="9" width="1" height="1" fill="#606060"/><rect x="1" y="9" width="14" height="1" fill="#D6D6D6"/><rect x="15" y="9" width="1" height="1" fill="#606060"/><rect x="0" y="10" width="1" height="1" fill="#606060"/><rect x="1" y="10" width="14" height="1" fill="#D6D6D6"/><rect x="15" y="10" width="1" height="1" fill="#606060"/><rect x="0" y="11" width="1" height="1" fill="#606060"/><rect x="1" y="11" width="14" height="1" fill="#D6D6D6"/><rect x="15" y="11" width="1" height="1" fill="#606060"/><rect x="0" y="12" width="1" height="1" fill="#606060"/><rect x="1" y="12" width="14" height="1" fill="#D6D6D6"/><rect x="15" y="12" width="1" height="1" fill="#606060"/><rect x="0" y="13" width="16" height="1" fill="#606060"/></svg><div class="a t" style="left:112px;top:243px;line-height:14px;color:#760076;font-weight:bold;letter-spacing:0.35px;-webkit-text-stroke:0">Fields</div><div class="a" style="left:79px;top:264px;width:7px;height:1px;background:repeating-linear-gradient(to right,#C8B45A 0 1px,transparent 1px 2px)"></div><!--icon buttons--><svg class="a" style="left:91px;top:260px" width="16" height="8" shape-rendering="crispEdges"><rect x="0" y="0" width="15" height="1" fill="#E8E8E8"/><rect x="15" y="0" width="1" height="1" fill="#000000"/><rect x="0" y="1" width="1" height="1" fill="#E8E8E8"/><rect x="1" y="1" width="14" height="1" fill="#C4C4C4"/><rect x="15" y="1" width="1" height="1" fill="#000000"/><rect x="0" y="2" width="1" height="1" fill="#E8E8E8"/><rect x="1" y="2" width="1" height="1" fill="#C4C4C4"/><rect x="2" y="2" width="10" height="1" fill="#000000"/><rect x="12" y="2" width="3" height="1" fill="#C4C4C4"/><rect x="15" y="2" width="1" height="1" fill="#000000"/><rect x="0" y="3" width="1" height="1" fill="#E8E8E8"/><rect x="1" y="3" width="1" height="1" fill="#C4C4C4"/><rect x="2" y="3" width="1" height="1" fill="#000000"/><rect x="3" y="3" width="1" height="1" fill="#FFFFFF"/><rect x="4" y="3" width="2" height="1" fill="#000000"/><rect x="6" y="3" width="2" height="1" fill="#FFFFFF"/><rect x="8" y="3" width="2" height="1" fill="#000000"/><rect x="10" y="3" width="1" height="1" fill="#FFFFFF"/><rect x="11" y="3" width="3" height="1" fill="#000000"/><rect x="14" y="3" width="1" height="1" fill="#C4C4C4"/><rect x="15" y="3" width="1" height="1" fill="#000000"/><rect x="0" y="4" width="1" height="1" fill="#E8E8E8"/><rect x="1" y="4" width="1" height="1" fill="#C4C4C4"/><rect x="2" y="4" width="2" height="1" fill="#000000"/><rect x="4" y="4" width="1" height="1" fill="#FFFFFF"/><rect x="5" y="4" width="1" height="1" fill="#000000"/><rect x="6" y="4" width="1" height="1" fill="#FFFFFF"/><rect x="7" y="4" width="1" height="1" fill="#000000"/><rect x="8" y="4" width="1" height="1" fill="#FFFFFF"/><rect x="9" y="4" width="2" height="1" fill="#000000"/><rect x="11" y="4" width="1" height="1" fill="#FFFFFF"/><rect x="12" y="4" width="2" height="1" fill="#000000"/><rect x="14" y="4" width="1" height="1" fill="#C4C4C4"/><rect x="15" y="4" width="1" height="1" fill="#000000"/><rect x="0" y="5" width="1" height="1" fill="#E8E8E8"/><rect x="1" y="5" width="1" height="1" fill="#C4C4C4"/><rect x="2" y="5" width="7" height="1" fill="#000000"/><rect x="9" y="5" width="1" height="1" fill="#F08018"/><rect x="10" y="5" width="4" height="1" fill="#000000"/><rect x="14" y="5" width="1" height="1" fill="#C4C4C4"/><rect x="15" y="5" width="1" height="1" fill="#000000"/><rect x="0" y="6" width="1" height="1" fill="#E8E8E8"/><rect x="1" y="6" width="14" height="1" fill="#C4C4C4"/><rect x="15" y="6" width="1" height="1" fill="#000000"/><rect x="0" y="7" width="16" height="1" fill="#000000"/></svg><div class="a t" style="left:112px;top:257px;line-height:14px;color:#760076;font-weight:bold;letter-spacing:0.35px;-webkit-text-stroke:0">Buttons</div><div class="a" style="left:79px;top:278px;width:7px;height:1px;background:repeating-linear-gradient(to right,#C8B45A 0 1px,transparent 1px 2px)"></div><!--icon columns--><svg class="a" style="left:90px;top:271px" width="16" height="14" shape-rendering="crispEdges"><rect x="0" y="0" width="1" height="1" fill="#80A020"/><rect x="1" y="0" width="3" height="1" fill="#F08018"/><rect x="4" y="0" width="1" height="1" fill="#000000"/><rect x="5" y="0" width="6" height="1" fill="#F08018"/><rect x="11" y="0" width="1" height="1" fill="#000000"/><rect x="12" y="0" width="3" height="1" fill="#F08018"/><rect x="15" y="0" width="1" height="1" fill="#4070E0"/><rect x="0" y="1" width="1" height="1" fill="#8C8C8C"/><rect x="1" y="1" width="3" height="1" fill="#F08018"/><rect x="4" y="1" width="1" height="1" fill="#000000"/><rect x="5" y="1" width="6" height="1" fill="#F08018"/><rect x="11" y="1" width="1" height="1" fill="#000000"/><rect x="12" y="1" width="4" height="1" fill="#F08018"/><rect x="0" y="2" width="16" height="1" fill="#000000"/><rect x="0" y="3" width="1" height="1" fill="#8C8C8C"/><rect x="1" y="3" width="3" height="1" fill="#FFFFFF"/><rect x="4" y="3" width="1" height="1" fill="#000000"/><rect x="5" y="3" width="6" height="1" fill="#FFFFFF"/><rect x="11" y="3" width="1" height="1" fill="#000000"/><rect x="12" y="3" width="3" height="1" fill="#FFFFFF"/><rect x="15" y="3" width="1" height="1" fill="#8C8C8C"/><rect x="0" y="4" width="1" height="1" fill="#8C8C8C"/><rect x="1" y="4" width="3" height="1" fill="#FFFFFF"/><rect x="4" y="4" width="1" height="1" fill="#000000"/><rect x="5" y="4" width="6" height="1" fill="#FFFFFF"/><rect x="11" y="4" width="1" height="1" fill="#000000"/><rect x="12" y="4" width="3" height="1" fill="#FFFFFF"/><rect x="15" y="4" width="1" height="1" fill="#8C8C8C"/><rect x="0" y="5" width="1" height="1" fill="#8C8C8C"/><rect x="1" y="5" width="3" height="1" fill="#FFFFFF"/><rect x="4" y="5" width="1" height="1" fill="#000000"/><rect x="5" y="5" width="6" height="1" fill="#FFFFFF"/><rect x="11" y="5" width="1" height="1" fill="#000000"/><rect x="12" y="5" width="3" height="1" fill="#FFFFFF"/><rect x="15" y="5" width="1" height="1" fill="#8C8C8C"/><rect x="0" y="6" width="1" height="1" fill="#8C8C8C"/><rect x="1" y="6" width="3" height="1" fill="#FFFFFF"/><rect x="4" y="6" width="1" height="1" fill="#000000"/><rect x="5" y="6" width="6" height="1" fill="#FFFFFF"/><rect x="11" y="6" width="1" height="1" fill="#000000"/><rect x="12" y="6" width="3" height="1" fill="#FFFFFF"/><rect x="15" y="6" width="1" height="1" fill="#8C8C8C"/><rect x="0" y="7" width="1" height="1" fill="#8C8C8C"/><rect x="1" y="7" width="3" height="1" fill="#FFFFFF"/><rect x="4" y="7" width="1" height="1" fill="#000000"/><rect x="5" y="7" width="6" height="1" fill="#FFFFFF"/><rect x="11" y="7" width="1" height="1" fill="#000000"/><rect x="12" y="7" width="3" height="1" fill="#FFFFFF"/><rect x="15" y="7" width="1" height="1" fill="#8C8C8C"/><rect x="0" y="8" width="1" height="1" fill="#8C8C8C"/><rect x="1" y="8" width="3" height="1" fill="#FFFFFF"/><rect x="4" y="8" width="1" height="1" fill="#000000"/><rect x="5" y="8" width="6" height="1" fill="#FFFFFF"/><rect x="11" y="8" width="1" height="1" fill="#000000"/><rect x="12" y="8" width="3" height="1" fill="#FFFFFF"/><rect x="15" y="8" width="1" height="1" fill="#8C8C8C"/><rect x="0" y="9" width="1" height="1" fill="#8C8C8C"/><rect x="1" y="9" width="3" height="1" fill="#FFFFFF"/><rect x="4" y="9" width="1" height="1" fill="#000000"/><rect x="5" y="9" width="6" height="1" fill="#FFFFFF"/><rect x="11" y="9" width="1" height="1" fill="#000000"/><rect x="12" y="9" width="3" height="1" fill="#FFFFFF"/><rect x="15" y="9" width="1" height="1" fill="#8C8C8C"/><rect x="0" y="10" width="1" height="1" fill="#8C8C8C"/><rect x="1" y="10" width="3" height="1" fill="#FFFFFF"/><rect x="4" y="10" width="1" height="1" fill="#000000"/><rect x="5" y="10" width="6" height="1" fill="#FFFFFF"/><rect x="11" y="10" width="1" height="1" fill="#000000"/><rect x="12" y="10" width="3" height="1" fill="#FFFFFF"/><rect x="15" y="10" width="1" height="1" fill="#8C8C8C"/><rect x="0" y="11" width="1" height="1" fill="#8C8C8C"/><rect x="1" y="11" width="3" height="1" fill="#FFFFFF"/><rect x="4" y="11" width="1" height="1" fill="#000000"/><rect x="5" y="11" width="6" height="1" fill="#FFFFFF"/><rect x="11" y="11" width="1" height="1" fill="#000000"/><rect x="12" y="11" width="3" height="1" fill="#FFFFFF"/><rect x="15" y="11" width="1" height="1" fill="#8C8C8C"/><rect x="0" y="12" width="1" height="1" fill="#8C8C8C"/><rect x="1" y="12" width="3" height="1" fill="#FFFFFF"/><rect x="4" y="12" width="1" height="1" fill="#000000"/><rect x="5" y="12" width="6" height="1" fill="#FFFFFF"/><rect x="11" y="12" width="1" height="1" fill="#000000"/><rect x="12" y="12" width="3" height="1" fill="#FFFFFF"/><rect x="15" y="12" width="1" height="1" fill="#8C8C8C"/><rect x="0" y="13" width="1" height="1" fill="#8C8C8C"/><rect x="1" y="13" width="3" height="1" fill="#FFFFFF"/><rect x="4" y="13" width="1" height="1" fill="#000000"/><rect x="5" y="13" width="6" height="1" fill="#FFFFFF"/><rect x="11" y="13" width="1" height="1" fill="#000000"/><rect x="12" y="13" width="3" height="1" fill="#FFFFFF"/><rect x="15" y="13" width="1" height="1" fill="#8C8C8C"/></svg><div class="a t" style="left:112px;top:271px;line-height:14px;color:#760076;font-weight:bold;letter-spacing:0.35px;-webkit-text-stroke:0">Columns</div><div class="a" style="left:79px;top:292px;width:7px;height:1px;background:repeating-linear-gradient(to right,#C8B45A 0 1px,transparent 1px 2px)"></div><!--icon regions--><svg class="a" style="left:91px;top:284px" width="15" height="16" shape-rendering="crispEdges"><rect x="0" y="0" width="5" height="1" fill="#000000"/><rect x="0" y="1" width="1" height="1" fill="#000000"/><rect x="1" y="1" width="3" height="1" fill="#F08018"/><rect x="4" y="1" width="1" height="1" fill="#000000"/><rect x="0" y="2" width="5" height="1" fill="#000000"/><rect x="0" y="3" width="1" height="1" fill="#000000"/><rect x="1" y="3" width="4" height="1" fill="#FFFFFF"/><rect x="5" y="3" width="5" height="1" fill="#000000"/><rect x="0" y="4" width="6" height="1" fill="#000000"/><rect x="6" y="4" width="3" height="1" fill="#E03020"/><rect x="9" y="4" width="1" height="1" fill="#000000"/><rect x="0" y="5" width="1" height="1" fill="#000000"/><rect x="5" y="5" width="5" height="1" fill="#000000"/><rect x="0" y="6" width="1" height="1" fill="#000000"/><rect x="0" y="7" width="1" height="1" fill="#000000"/><rect x="5" y="7" width="5" height="1" fill="#000000"/><rect x="0" y="8" width="6" height="1" fill="#000000"/><rect x="6" y="8" width="3" height="1" fill="#D8A020"/><rect x="9" y="8" width="1" height="1" fill="#000000"/><rect x="0" y="9" width="1" height="1" fill="#000000"/><rect x="1" y="9" width="4" height="1" fill="#FFFFFF"/><rect x="5" y="9" width="5" height="1" fill="#000000"/><rect x="0" y="10" width="1" height="1" fill="#000000"/><rect x="5" y="10" width="1" height="1" fill="#000000"/><rect x="6" y="10" width="4" height="1" fill="#FFFFFF"/><rect x="10" y="10" width="5" height="1" fill="#000000"/><rect x="0" y="11" width="1" height="1" fill="#000000"/><rect x="5" y="11" width="6" height="1" fill="#000000"/><rect x="11" y="11" width="3" height="1" fill="#80A020"/><rect x="14" y="11" width="1" height="1" fill="#000000"/><rect x="0" y="12" width="1" height="1" fill="#000000"/><rect x="5" y="12" width="5" height="1" fill="#FFFFFF"/><rect x="10" y="12" width="5" height="1" fill="#000000"/><rect x="0" y="13" width="1" height="1" fill="#000000"/><rect x="5" y="13" width="5" height="1" fill="#000000"/><rect x="0" y="14" width="6" height="1" fill="#000000"/><rect x="6" y="14" width="3" height="1" fill="#4070E0"/><rect x="9" y="14" width="1" height="1" fill="#000000"/><rect x="5" y="15" width="5" height="1" fill="#000000"/></svg><div class="a t" style="left:112px;top:285px;line-height:14px;color:#760076;font-weight:bold;letter-spacing:0.35px;-webkit-text-stroke:0">Regions</div><div class="a" style="left:63px;top:306px;width:3px;height:1px;background:repeating-linear-gradient(to right,#C8B45A 0 1px,transparent 1px 2px)"></div><div class="a" style="left:53px;top:302px;width:9px;height:9px;border:1px solid #C9B84E;background:#fff;box-sizing:border-box"></div><div class="a" style="left:55px;top:306px;width:5px;height:1px;background:#000"></div><div class="a" style="left:57px;top:304px;width:1px;height:5px;background:#000"></div><!--icon ctl--><svg class="a" style="left:70px;top:299px" width="16" height="14" shape-rendering="crispEdges"><rect x="0" y="0" width="1" height="1" fill="#8C8C8C"/><rect x="15" y="0" width="1" height="1" fill="#8C8C8C"/><rect x="0" y="1" width="1" height="1" fill="#8C8C8C"/><rect x="15" y="1" width="1" height="1" fill="#8C8C8C"/><rect x="0" y="2" width="16" height="1" fill="#8C8C8C"/><rect x="0" y="3" width="1" height="1" fill="#8C8C8C"/><rect x="6" y="3" width="2" height="1" fill="#8C8C8C"/><rect x="15" y="3" width="1" height="1" fill="#8C8C8C"/><rect x="0" y="4" width="16" height="1" fill="#8C8C8C"/><rect x="0" y="5" width="1" height="1" fill="#8C8C8C"/><rect x="1" y="5" width="14" height="1" fill="#D6D6D6"/><rect x="15" y="5" width="1" height="1" fill="#8C8C8C"/><rect x="0" y="6" width="1" height="1" fill="#8C8C8C"/><rect x="1" y="6" width="1" height="1" fill="#D6D6D6"/><rect x="2" y="6" width="4" height="1" fill="#000000"/><rect x="6" y="6" width="2" height="1" fill="#D6D6D6"/><rect x="8" y="6" width="1" height="1" fill="#000000"/><rect x="9" y="6" width="1" height="1" fill="#D6D6D6"/><rect x="10" y="6" width="4" height="1" fill="#000000"/><rect x="14" y="6" width="1" height="1" fill="#D6D6D6"/><rect x="15" y="6" width="1" height="1" fill="#8C8C8C"/><rect x="0" y="7" width="1" height="1" fill="#8C8C8C"/><rect x="1" y="7" width="1" height="1" fill="#D6D6D6"/><rect x="2" y="7" width="1" height="1" fill="#000000"/><rect x="3" y="7" width="1" height="1" fill="#FFFFFF"/><rect x="4" y="7" width="1" height="1" fill="#F08018"/><rect x="5" y="7" width="1" height="1" fill="#FFFFFF"/><rect x="6" y="7" width="9" height="1" fill="#D6D6D6"/><rect x="15" y="7" width="1" height="1" fill="#8C8C8C"/><rect x="0" y="8" width="1" height="1" fill="#8C8C8C"/><rect x="1" y="8" width="1" height="1" fill="#D6D6D6"/><rect x="2" y="8" width="1" height="1" fill="#000000"/><rect x="3" y="8" width="3" height="1" fill="#FFFFFF"/><rect x="6" y="8" width="2" height="1" fill="#D6D6D6"/><rect x="8" y="8" width="2" height="1" fill="#000000"/><rect x="10" y="8" width="1" height="1" fill="#D6D6D6"/><rect x="11" y="8" width="3" height="1" fill="#000000"/><rect x="14" y="8" width="1" height="1" fill="#D6D6D6"/><rect x="15" y="8" width="1" height="1" fill="#8C8C8C"/><rect x="0" y="9" width="1" height="1" fill="#8C8C8C"/><rect x="1" y="9" width="1" height="1" fill="#D6D6D6"/><rect x="2" y="9" width="4" height="1" fill="#000000"/><rect x="6" y="9" width="9" height="1" fill="#D6D6D6"/><rect x="15" y="9" width="1" height="1" fill="#8C8C8C"/><rect x="0" y="10" width="1" height="1" fill="#8C8C8C"/><rect x="1" y="10" width="1" height="1" fill="#D6D6D6"/><rect x="2" y="10" width="1" height="1" fill="#000000"/><rect x="3" y="10" width="3" height="1" fill="#FFFFFF"/><rect x="6" y="10" width="2" height="1" fill="#D6D6D6"/><rect x="8" y="10" width="4" height="1" fill="#000000"/><rect x="12" y="10" width="1" height="1" fill="#D6D6D6"/><rect x="13" y="10" width="1" height="1" fill="#000000"/><rect x="14" y="10" width="1" height="1" fill="#D6D6D6"/><rect x="15" y="10" width="1" height="1" fill="#8C8C8C"/><rect x="0" y="11" width="1" height="1" fill="#8C8C8C"/><rect x="1" y="11" width="1" height="1" fill="#D6D6D6"/><rect x="2" y="11" width="1" height="1" fill="#000000"/><rect x="3" y="11" width="3" height="1" fill="#F08018"/><rect x="6" y="11" width="9" height="1" fill="#D6D6D6"/><rect x="15" y="11" width="1" height="1" fill="#8C8C8C"/><rect x="0" y="12" width="1" height="1" fill="#8C8C8C"/><rect x="1" y="12" width="1" height="1" fill="#D6D6D6"/><rect x="2" y="12" width="1" height="1" fill="#000000"/><rect x="3" y="12" width="3" height="1" fill="#FFFFFF"/><rect x="6" y="12" width="2" height="1" fill="#D6D6D6"/><rect x="8" y="12" width="1" height="1" fill="#000000"/><rect x="9" y="12" width="1" height="1" fill="#D6D6D6"/><rect x="10" y="12" width="3" height="1" fill="#000000"/><rect x="13" y="12" width="2" height="1" fill="#D6D6D6"/><rect x="15" y="12" width="1" height="1" fill="#8C8C8C"/><rect x="0" y="13" width="16" height="1" fill="#8C8C8C"/></svg><div class="a t" style="left:92px;top:299px;line-height:14px;color:#000;font-weight:normal;">edit_references</div><div class="a t" style="left:261px;top:299px;line-height:14px;color:#000">Person</div><div class="a" style="left:63px;top:320px;width:3px;height:1px;background:repeating-linear-gradient(to right,#C8B45A 0 1px,transparent 1px 2px)"></div><div class="a" style="left:53px;top:316px;width:9px;height:9px;border:1px solid #C9B84E;background:#fff;box-sizing:border-box"></div><div class="a" style="left:55px;top:320px;width:5px;height:1px;background:#000"></div><div class="a" style="left:57px;top:318px;width:1px;height:5px;background:#000"></div><!--icon ctl--><svg class="a" style="left:70px;top:313px" width="16" height="14" shape-rendering="crispEdges"><rect x="0" y="0" width="1" height="1" fill="#8C8C8C"/><rect x="15" y="0" width="1" height="1" fill="#8C8C8C"/><rect x="0" y="1" width="1" height="1" fill="#8C8C8C"/><rect x="15" y="1" width="1" height="1" fill="#8C8C8C"/><rect x="0" y="2" width="16" height="1" fill="#8C8C8C"/><rect x="0" y="3" width="1" height="1" fill="#8C8C8C"/><rect x="6" y="3" width="2" height="1" fill="#8C8C8C"/><rect x="15" y="3" width="1" height="1" fill="#8C8C8C"/><rect x="0" y="4" width="16" height="1" fill="#8C8C8C"/><rect x="0" y="5" width="1" height="1" fill="#8C8C8C"/><rect x="1" y="5" width="14" height="1" fill="#D6D6D6"/><rect x="15" y="5" width="1" height="1" fill="#8C8C8C"/><rect x="0" y="6" width="1" height="1" fill="#8C8C8C"/><rect x="1" y="6" width="1" height="1" fill="#D6D6D6"/><rect x="2" y="6" width="4" height="1" fill="#000000"/><rect x="6" y="6" width="2" height="1" fill="#D6D6D6"/><rect x="8" y="6" width="1" height="1" fill="#000000"/><rect x="9" y="6" width="1" height="1" fill="#D6D6D6"/><rect x="10" y="6" width="4" height="1" fill="#000000"/><rect x="14" y="6" width="1" height="1" fill="#D6D6D6"/><rect x="15" y="6" width="1" height="1" fill="#8C8C8C"/><rect x="0" y="7" width="1" height="1" fill="#8C8C8C"/><rect x="1" y="7" width="1" height="1" fill="#D6D6D6"/><rect x="2" y="7" width="1" height="1" fill="#000000"/><rect x="3" y="7" width="1" height="1" fill="#FFFFFF"/><rect x="4" y="7" width="1" height="1" fill="#F08018"/><rect x="5" y="7" width="1" height="1" fill="#FFFFFF"/><rect x="6" y="7" width="9" height="1" fill="#D6D6D6"/><rect x="15" y="7" width="1" height="1" fill="#8C8C8C"/><rect x="0" y="8" width="1" height="1" fill="#8C8C8C"/><rect x="1" y="8" width="1" height="1" fill="#D6D6D6"/><rect x="2" y="8" width="1" height="1" fill="#000000"/><rect x="3" y="8" width="3" height="1" fill="#FFFFFF"/><rect x="6" y="8" width="2" height="1" fill="#D6D6D6"/><rect x="8" y="8" width="2" height="1" fill="#000000"/><rect x="10" y="8" width="1" height="1" fill="#D6D6D6"/><rect x="11" y="8" width="3" height="1" fill="#000000"/><rect x="14" y="8" width="1" height="1" fill="#D6D6D6"/><rect x="15" y="8" width="1" height="1" fill="#8C8C8C"/><rect x="0" y="9" width="1" height="1" fill="#8C8C8C"/><rect x="1" y="9" width="1" height="1" fill="#D6D6D6"/><rect x="2" y="9" width="4" height="1" fill="#000000"/><rect x="6" y="9" width="9" height="1" fill="#D6D6D6"/><rect x="15" y="9" width="1" height="1" fill="#8C8C8C"/><rect x="0" y="10" width="1" height="1" fill="#8C8C8C"/><rect x="1" y="10" width="1" height="1" fill="#D6D6D6"/><rect x="2" y="10" width="1" height="1" fill="#000000"/><rect x="3" y="10" width="3" height="1" fill="#FFFFFF"/><rect x="6" y="10" width="2" height="1" fill="#D6D6D6"/><rect x="8" y="10" width="4" height="1" fill="#000000"/><rect x="12" y="10" width="1" height="1" fill="#D6D6D6"/><rect x="13" y="10" width="1" height="1" fill="#000000"/><rect x="14" y="10" width="1" height="1" fill="#D6D6D6"/><rect x="15" y="10" width="1" height="1" fill="#8C8C8C"/><rect x="0" y="11" width="1" height="1" fill="#8C8C8C"/><rect x="1" y="11" width="1" height="1" fill="#D6D6D6"/><rect x="2" y="11" width="1" height="1" fill="#000000"/><rect x="3" y="11" width="3" height="1" fill="#F08018"/><rect x="6" y="11" width="9" height="1" fill="#D6D6D6"/><rect x="15" y="11" width="1" height="1" fill="#8C8C8C"/><rect x="0" y="12" width="1" height="1" fill="#8C8C8C"/><rect x="1" y="12" width="1" height="1" fill="#D6D6D6"/><rect x="2" y="12" width="1" height="1" fill="#000000"/><rect x="3" y="12" width="3" height="1" fill="#FFFFFF"/><rect x="6" y="12" width="2" height="1" fill="#D6D6D6"/><rect x="8" y="12" width="1" height="1" fill="#000000"/><rect x="9" y="12" width="1" height="1" fill="#D6D6D6"/><rect x="10" y="12" width="3" height="1" fill="#000000"/><rect x="13" y="12" width="2" height="1" fill="#D6D6D6"/><rect x="15" y="12" width="1" height="1" fill="#8C8C8C"/><rect x="0" y="13" width="16" height="1" fill="#8C8C8C"/></svg><div class="a t" style="left:92px;top:313px;line-height:14px;color:#000;font-weight:normal;">edit_static</div><div class="a t" style="left:261px;top:313px;line-height:14px;color:#000">Person</div><div class="a" style="left:63px;top:334px;width:3px;height:1px;background:repeating-linear-gradient(to right,#C8B45A 0 1px,transparent 1px 2px)"></div><div class="a" style="left:53px;top:330px;width:9px;height:9px;border:1px solid #C9B84E;background:#fff;box-sizing:border-box"></div><div class="a" style="left:55px;top:334px;width:5px;height:1px;background:#000"></div><div class="a" style="left:57px;top:332px;width:1px;height:5px;background:#000"></div><!--icon ctl--><svg class="a" style="left:70px;top:327px" width="16" height="14" shape-rendering="crispEdges"><rect x="0" y="0" width="1" height="1" fill="#8C8C8C"/><rect x="15" y="0" width="1" height="1" fill="#8C8C8C"/><rect x="0" y="1" width="1" height="1" fill="#8C8C8C"/><rect x="15" y="1" width="1" height="1" fill="#8C8C8C"/><rect x="0" y="2" width="16" height="1" fill="#8C8C8C"/><rect x="0" y="3" width="1" height="1" fill="#8C8C8C"/><rect x="6" y="3" width="2" height="1" fill="#8C8C8C"/><rect x="15" y="3" width="1" height="1" fill="#8C8C8C"/><rect x="0" y="4" width="16" height="1" fill="#8C8C8C"/><rect x="0" y="5" width="1" height="1" fill="#8C8C8C"/><rect x="1" y="5" width="14" height="1" fill="#D6D6D6"/><rect x="15" y="5" width="1" height="1" fill="#8C8C8C"/><rect x="0" y="6" width="1" height="1" fill="#8C8C8C"/><rect x="1" y="6" width="1" height="1" fill="#D6D6D6"/><rect x="2" y="6" width="4" height="1" fill="#000000"/><rect x="6" y="6" width="2" height="1" fill="#D6D6D6"/><rect x="8" y="6" width="1" height="1" fill="#000000"/><rect x="9" y="6" width="1" height="1" fill="#D6D6D6"/><rect x="10" y="6" width="4" height="1" fill="#000000"/><rect x="14" y="6" width="1" height="1" fill="#D6D6D6"/><rect x="15" y="6" width="1" height="1" fill="#8C8C8C"/><rect x="0" y="7" width="1" height="1" fill="#8C8C8C"/><rect x="1" y="7" width="1" height="1" fill="#D6D6D6"/><rect x="2" y="7" width="1" height="1" fill="#000000"/><rect x="3" y="7" width="1" height="1" fill="#FFFFFF"/><rect x="4" y="7" width="1" height="1" fill="#F08018"/><rect x="5" y="7" width="1" height="1" fill="#FFFFFF"/><rect x="6" y="7" width="9" height="1" fill="#D6D6D6"/><rect x="15" y="7" width="1" height="1" fill="#8C8C8C"/><rect x="0" y="8" width="1" height="1" fill="#8C8C8C"/><rect x="1" y="8" width="1" height="1" fill="#D6D6D6"/><rect x="2" y="8" width="1" height="1" fill="#000000"/><rect x="3" y="8" width="3" height="1" fill="#FFFFFF"/><rect x="6" y="8" width="2" height="1" fill="#D6D6D6"/><rect x="8" y="8" width="2" height="1" fill="#000000"/><rect x="10" y="8" width="1" height="1" fill="#D6D6D6"/><rect x="11" y="8" width="3" height="1" fill="#000000"/><rect x="14" y="8" width="1" height="1" fill="#D6D6D6"/><rect x="15" y="8" width="1" height="1" fill="#8C8C8C"/><rect x="0" y="9" width="1" height="1" fill="#8C8C8C"/><rect x="1" y="9" width="1" height="1" fill="#D6D6D6"/><rect x="2" y="9" width="4" height="1" fill="#000000"/><rect x="6" y="9" width="9" height="1" fill="#D6D6D6"/><rect x="15" y="9" width="1" height="1" fill="#8C8C8C"/><rect x="0" y="10" width="1" height="1" fill="#8C8C8C"/><rect x="1" y="10" width="1" height="1" fill="#D6D6D6"/><rect x="2" y="10" width="1" height="1" fill="#000000"/><rect x="3" y="10" width="3" height="1" fill="#FFFFFF"/><rect x="6" y="10" width="2" height="1" fill="#D6D6D6"/><rect x="8" y="10" width="4" height="1" fill="#000000"/><rect x="12" y="10" width="1" height="1" fill="#D6D6D6"/><rect x="13" y="10" width="1" height="1" fill="#000000"/><rect x="14" y="10" width="1" height="1" fill="#D6D6D6"/><rect x="15" y="10" width="1" height="1" fill="#8C8C8C"/><rect x="0" y="11" width="1" height="1" fill="#8C8C8C"/><rect x="1" y="11" width="1" height="1" fill="#D6D6D6"/><rect x="2" y="11" width="1" height="1" fill="#000000"/><rect x="3" y="11" width="3" height="1" fill="#F08018"/><rect x="6" y="11" width="9" height="1" fill="#D6D6D6"/><rect x="15" y="11" width="1" height="1" fill="#8C8C8C"/><rect x="0" y="12" width="1" height="1" fill="#8C8C8C"/><rect x="1" y="12" width="1" height="1" fill="#D6D6D6"/><rect x="2" y="12" width="1" height="1" fill="#000000"/><rect x="3" y="12" width="3" height="1" fill="#FFFFFF"/><rect x="6" y="12" width="2" height="1" fill="#D6D6D6"/><rect x="8" y="12" width="1" height="1" fill="#000000"/><rect x="9" y="12" width="1" height="1" fill="#D6D6D6"/><rect x="10" y="12" width="3" height="1" fill="#000000"/><rect x="13" y="12" width="2" height="1" fill="#D6D6D6"/><rect x="15" y="12" width="1" height="1" fill="#8C8C8C"/><rect x="0" y="13" width="16" height="1" fill="#8C8C8C"/></svg><div class="a t" style="left:92px;top:327px;line-height:14px;color:#000;font-weight:normal;">tab_edit</div><div class="a t" style="left:261px;top:327px;line-height:14px;color:#000">Person</div><div class="a" style="left:63px;top:348px;width:3px;height:1px;background:repeating-linear-gradient(to right,#C8B45A 0 1px,transparent 1px 2px)"></div><div class="a" style="left:53px;top:344px;width:9px;height:9px;border:1px solid #C9B84E;background:#fff;box-sizing:border-box"></div><div class="a" style="left:55px;top:348px;width:5px;height:1px;background:#000"></div><div class="a" style="left:57px;top:346px;width:1px;height:5px;background:#000"></div><!--icon ctl--><svg class="a" style="left:70px;top:341px" width="16" height="14" shape-rendering="crispEdges"><rect x="0" y="0" width="1" height="1" fill="#8C8C8C"/><rect x="15" y="0" width="1" height="1" fill="#8C8C8C"/><rect x="0" y="1" width="1" height="1" fill="#8C8C8C"/><rect x="15" y="1" width="1" height="1" fill="#8C8C8C"/><rect x="0" y="2" width="16" height="1" fill="#8C8C8C"/><rect x="0" y="3" width="1" height="1" fill="#8C8C8C"/><rect x="6" y="3" width="2" height="1" fill="#8C8C8C"/><rect x="15" y="3" width="1" height="1" fill="#8C8C8C"/><rect x="0" y="4" width="16" height="1" fill="#8C8C8C"/><rect x="0" y="5" width="1" height="1" fill="#8C8C8C"/><rect x="1" y="5" width="14" height="1" fill="#D6D6D6"/><rect x="15" y="5" width="1" height="1" fill="#8C8C8C"/><rect x="0" y="6" width="1" height="1" fill="#8C8C8C"/><rect x="1" y="6" width="1" height="1" fill="#D6D6D6"/><rect x="2" y="6" width="4" height="1" fill="#000000"/><rect x="6" y="6" width="2" height="1" fill="#D6D6D6"/><rect x="8" y="6" width="1" height="1" fill="#000000"/><rect x="9" y="6" width="1" height="1" fill="#D6D6D6"/><rect x="10" y="6" width="4" height="1" fill="#000000"/><rect x="14" y="6" width="1" height="1" fill="#D6D6D6"/><rect x="15" y="6" width="1" height="1" fill="#8C8C8C"/><rect x="0" y="7" width="1" height="1" fill="#8C8C8C"/><rect x="1" y="7" width="1" height="1" fill="#D6D6D6"/><rect x="2" y="7" width="1" height="1" fill="#000000"/><rect x="3" y="7" width="1" height="1" fill="#FFFFFF"/><rect x="4" y="7" width="1" height="1" fill="#F08018"/><rect x="5" y="7" width="1" height="1" fill="#FFFFFF"/><rect x="6" y="7" width="9" height="1" fill="#D6D6D6"/><rect x="15" y="7" width="1" height="1" fill="#8C8C8C"/><rect x="0" y="8" width="1" height="1" fill="#8C8C8C"/><rect x="1" y="8" width="1" height="1" fill="#D6D6D6"/><rect x="2" y="8" width="1" height="1" fill="#000000"/><rect x="3" y="8" width="3" height="1" fill="#FFFFFF"/><rect x="6" y="8" width="2" height="1" fill="#D6D6D6"/><rect x="8" y="8" width="2" height="1" fill="#000000"/><rect x="10" y="8" width="1" height="1" fill="#D6D6D6"/><rect x="11" y="8" width="3" height="1" fill="#000000"/><rect x="14" y="8" width="1" height="1" fill="#D6D6D6"/><rect x="15" y="8" width="1" height="1" fill="#8C8C8C"/><rect x="0" y="9" width="1" height="1" fill="#8C8C8C"/><rect x="1" y="9" width="1" height="1" fill="#D6D6D6"/><rect x="2" y="9" width="4" height="1" fill="#000000"/><rect x="6" y="9" width="9" height="1" fill="#D6D6D6"/><rect x="15" y="9" width="1" height="1" fill="#8C8C8C"/><rect x="0" y="10" width="1" height="1" fill="#8C8C8C"/><rect x="1" y="10" width="1" height="1" fill="#D6D6D6"/><rect x="2" y="10" width="1" height="1" fill="#000000"/><rect x="3" y="10" width="3" height="1" fill="#FFFFFF"/><rect x="6" y="10" width="2" height="1" fill="#D6D6D6"/><rect x="8" y="10" width="4" height="1" fill="#000000"/><rect x="12" y="10" width="1" height="1" fill="#D6D6D6"/><rect x="13" y="10" width="1" height="1" fill="#000000"/><rect x="14" y="10" width="1" height="1" fill="#D6D6D6"/><rect x="15" y="10" width="1" height="1" fill="#8C8C8C"/><rect x="0" y="11" width="1" height="1" fill="#8C8C8C"/><rect x="1" y="11" width="1" height="1" fill="#D6D6D6"/><rect x="2" y="11" width="1" height="1" fill="#000000"/><rect x="3" y="11" width="3" height="1" fill="#F08018"/><rect x="6" y="11" width="9" height="1" fill="#D6D6D6"/><rect x="15" y="11" width="1" height="1" fill="#8C8C8C"/><rect x="0" y="12" width="1" height="1" fill="#8C8C8C"/><rect x="1" y="12" width="1" height="1" fill="#D6D6D6"/><rect x="2" y="12" width="1" height="1" fill="#000000"/><rect x="3" y="12" width="3" height="1" fill="#FFFFFF"/><rect x="6" y="12" width="2" height="1" fill="#D6D6D6"/><rect x="8" y="12" width="1" height="1" fill="#000000"/><rect x="9" y="12" width="1" height="1" fill="#D6D6D6"/><rect x="10" y="12" width="3" height="1" fill="#000000"/><rect x="13" y="12" width="2" height="1" fill="#D6D6D6"/><rect x="15" y="12" width="1" height="1" fill="#8C8C8C"/><rect x="0" y="13" width="16" height="1" fill="#8C8C8C"/></svg><div class="a t" style="left:92px;top:341px;line-height:14px;color:#000;font-weight:normal;">tab_edit_frame</div><div class="a t" style="left:261px;top:341px;line-height:14px;color:#000">Person</div><div class="a" style="left:63px;top:362px;width:3px;height:1px;background:repeating-linear-gradient(to right,#C8B45A 0 1px,transparent 1px 2px)"></div><div class="a" style="left:53px;top:358px;width:9px;height:9px;border:1px solid #C9B84E;background:#fff;box-sizing:border-box"></div><div class="a" style="left:55px;top:362px;width:5px;height:1px;background:#000"></div><div class="a" style="left:57px;top:360px;width:1px;height:5px;background:#000"></div><!--icon ctl--><svg class="a" style="left:70px;top:355px" width="16" height="14" shape-rendering="crispEdges"><rect x="0" y="0" width="1" height="1" fill="#8C8C8C"/><rect x="15" y="0" width="1" height="1" fill="#8C8C8C"/><rect x="0" y="1" width="1" height="1" fill="#8C8C8C"/><rect x="15" y="1" width="1" height="1" fill="#8C8C8C"/><rect x="0" y="2" width="16" height="1" fill="#8C8C8C"/><rect x="0" y="3" width="1" height="1" fill="#8C8C8C"/><rect x="6" y="3" width="2" height="1" fill="#8C8C8C"/><rect x="15" y="3" width="1" height="1" fill="#8C8C8C"/><rect x="0" y="4" width="16" height="1" fill="#8C8C8C"/><rect x="0" y="5" width="1" height="1" fill="#8C8C8C"/><rect x="1" y="5" width="14" height="1" fill="#D6D6D6"/><rect x="15" y="5" width="1" height="1" fill="#8C8C8C"/><rect x="0" y="6" width="1" height="1" fill="#8C8C8C"/><rect x="1" y="6" width="1" height="1" fill="#D6D6D6"/><rect x="2" y="6" width="4" height="1" fill="#000000"/><rect x="6" y="6" width="2" height="1" fill="#D6D6D6"/><rect x="8" y="6" width="1" height="1" fill="#000000"/><rect x="9" y="6" width="1" height="1" fill="#D6D6D6"/><rect x="10" y="6" width="4" height="1" fill="#000000"/><rect x="14" y="6" width="1" height="1" fill="#D6D6D6"/><rect x="15" y="6" width="1" height="1" fill="#8C8C8C"/><rect x="0" y="7" width="1" height="1" fill="#8C8C8C"/><rect x="1" y="7" width="1" height="1" fill="#D6D6D6"/><rect x="2" y="7" width="1" height="1" fill="#000000"/><rect x="3" y="7" width="1" height="1" fill="#FFFFFF"/><rect x="4" y="7" width="1" height="1" fill="#F08018"/><rect x="5" y="7" width="1" height="1" fill="#FFFFFF"/><rect x="6" y="7" width="9" height="1" fill="#D6D6D6"/><rect x="15" y="7" width="1" height="1" fill="#8C8C8C"/><rect x="0" y="8" width="1" height="1" fill="#8C8C8C"/><rect x="1" y="8" width="1" height="1" fill="#D6D6D6"/><rect x="2" y="8" width="1" height="1" fill="#000000"/><rect x="3" y="8" width="3" height="1" fill="#FFFFFF"/><rect x="6" y="8" width="2" height="1" fill="#D6D6D6"/><rect x="8" y="8" width="2" height="1" fill="#000000"/><rect x="10" y="8" width="1" height="1" fill="#D6D6D6"/><rect x="11" y="8" width="3" height="1" fill="#000000"/><rect x="14" y="8" width="1" height="1" fill="#D6D6D6"/><rect x="15" y="8" width="1" height="1" fill="#8C8C8C"/><rect x="0" y="9" width="1" height="1" fill="#8C8C8C"/><rect x="1" y="9" width="1" height="1" fill="#D6D6D6"/><rect x="2" y="9" width="4" height="1" fill="#000000"/><rect x="6" y="9" width="9" height="1" fill="#D6D6D6"/><rect x="15" y="9" width="1" height="1" fill="#8C8C8C"/><rect x="0" y="10" width="1" height="1" fill="#8C8C8C"/><rect x="1" y="10" width="1" height="1" fill="#D6D6D6"/><rect x="2" y="10" width="1" height="1" fill="#000000"/><rect x="3" y="10" width="3" height="1" fill="#FFFFFF"/><rect x="6" y="10" width="2" height="1" fill="#D6D6D6"/><rect x="8" y="10" width="4" height="1" fill="#000000"/><rect x="12" y="10" width="1" height="1" fill="#D6D6D6"/><rect x="13" y="10" width="1" height="1" fill="#000000"/><rect x="14" y="10" width="1" height="1" fill="#D6D6D6"/><rect x="15" y="10" width="1" height="1" fill="#8C8C8C"/><rect x="0" y="11" width="1" height="1" fill="#8C8C8C"/><rect x="1" y="11" width="1" height="1" fill="#D6D6D6"/><rect x="2" y="11" width="1" height="1" fill="#000000"/><rect x="3" y="11" width="3" height="1" fill="#F08018"/><rect x="6" y="11" width="9" height="1" fill="#D6D6D6"/><rect x="15" y="11" width="1" height="1" fill="#8C8C8C"/><rect x="0" y="12" width="1" height="1" fill="#8C8C8C"/><rect x="1" y="12" width="1" height="1" fill="#D6D6D6"/><rect x="2" y="12" width="1" height="1" fill="#000000"/><rect x="3" y="12" width="3" height="1" fill="#FFFFFF"/><rect x="6" y="12" width="2" height="1" fill="#D6D6D6"/><rect x="8" y="12" width="1" height="1" fill="#000000"/><rect x="9" y="12" width="1" height="1" fill="#D6D6D6"/><rect x="10" y="12" width="3" height="1" fill="#000000"/><rect x="13" y="12" width="2" height="1" fill="#D6D6D6"/><rect x="15" y="12" width="1" height="1" fill="#8C8C8C"/><rect x="0" y="13" width="16" height="1" fill="#8C8C8C"/></svg><div class="a t" style="left:92px;top:355px;line-height:14px;color:#000;font-weight:normal;">tools_edit</div><div class="a t" style="left:261px;top:355px;line-height:14px;color:#000">Person</div><div class="a" style="left:63px;top:376px;width:3px;height:1px;background:repeating-linear-gradient(to right,#C8B45A 0 1px,transparent 1px 2px)"></div><div class="a" style="left:53px;top:372px;width:9px;height:9px;border:1px solid #C9B84E;background:#fff;box-sizing:border-box"></div><div class="a" style="left:55px;top:376px;width:5px;height:1px;background:#000"></div><div class="a" style="left:57px;top:374px;width:1px;height:5px;background:#000"></div><!--icon ctl--><svg class="a" style="left:70px;top:369px" width="16" height="14" shape-rendering="crispEdges"><rect x="0" y="0" width="1" height="1" fill="#8C8C8C"/><rect x="15" y="0" width="1" height="1" fill="#8C8C8C"/><rect x="0" y="1" width="1" height="1" fill="#8C8C8C"/><rect x="15" y="1" width="1" height="1" fill="#8C8C8C"/><rect x="0" y="2" width="16" height="1" fill="#8C8C8C"/><rect x="0" y="3" width="1" height="1" fill="#8C8C8C"/><rect x="6" y="3" width="2" height="1" fill="#8C8C8C"/><rect x="15" y="3" width="1" height="1" fill="#8C8C8C"/><rect x="0" y="4" width="16" height="1" fill="#8C8C8C"/><rect x="0" y="5" width="1" height="1" fill="#8C8C8C"/><rect x="1" y="5" width="14" height="1" fill="#D6D6D6"/><rect x="15" y="5" width="1" height="1" fill="#8C8C8C"/><rect x="0" y="6" width="1" height="1" fill="#8C8C8C"/><rect x="1" y="6" width="1" height="1" fill="#D6D6D6"/><rect x="2" y="6" width="4" height="1" fill="#000000"/><rect x="6" y="6" width="2" height="1" fill="#D6D6D6"/><rect x="8" y="6" width="1" height="1" fill="#000000"/><rect x="9" y="6" width="1" height="1" fill="#D6D6D6"/><rect x="10" y="6" width="4" height="1" fill="#000000"/><rect x="14" y="6" width="1" height="1" fill="#D6D6D6"/><rect x="15" y="6" width="1" height="1" fill="#8C8C8C"/><rect x="0" y="7" width="1" height="1" fill="#8C8C8C"/><rect x="1" y="7" width="1" height="1" fill="#D6D6D6"/><rect x="2" y="7" width="1" height="1" fill="#000000"/><rect x="3" y="7" width="1" height="1" fill="#FFFFFF"/><rect x="4" y="7" width="1" height="1" fill="#F08018"/><rect x="5" y="7" width="1" height="1" fill="#FFFFFF"/><rect x="6" y="7" width="9" height="1" fill="#D6D6D6"/><rect x="15" y="7" width="1" height="1" fill="#8C8C8C"/><rect x="0" y="8" width="1" height="1" fill="#8C8C8C"/><rect x="1" y="8" width="1" height="1" fill="#D6D6D6"/><rect x="2" y="8" width="1" height="1" fill="#000000"/><rect x="3" y="8" width="3" height="1" fill="#FFFFFF"/><rect x="6" y="8" width="2" height="1" fill="#D6D6D6"/><rect x="8" y="8" width="2" height="1" fill="#000000"/><rect x="10" y="8" width="1" height="1" fill="#D6D6D6"/><rect x="11" y="8" width="3" height="1" fill="#000000"/><rect x="14" y="8" width="1" height="1" fill="#D6D6D6"/><rect x="15" y="8" width="1" height="1" fill="#8C8C8C"/><rect x="0" y="9" width="1" height="1" fill="#8C8C8C"/><rect x="1" y="9" width="1" height="1" fill="#D6D6D6"/><rect x="2" y="9" width="4" height="1" fill="#000000"/><rect x="6" y="9" width="9" height="1" fill="#D6D6D6"/><rect x="15" y="9" width="1" height="1" fill="#8C8C8C"/><rect x="0" y="10" width="1" height="1" fill="#8C8C8C"/><rect x="1" y="10" width="1" height="1" fill="#D6D6D6"/><rect x="2" y="10" width="1" height="1" fill="#000000"/><rect x="3" y="10" width="3" height="1" fill="#FFFFFF"/><rect x="6" y="10" width="2" height="1" fill="#D6D6D6"/><rect x="8" y="10" width="4" height="1" fill="#000000"/><rect x="12" y="10" width="1" height="1" fill="#D6D6D6"/><rect x="13" y="10" width="1" height="1" fill="#000000"/><rect x="14" y="10" width="1" height="1" fill="#D6D6D6"/><rect x="15" y="10" width="1" height="1" fill="#8C8C8C"/><rect x="0" y="11" width="1" height="1" fill="#8C8C8C"/><rect x="1" y="11" width="1" height="1" fill="#D6D6D6"/><rect x="2" y="11" width="1" height="1" fill="#000000"/><rect x="3" y="11" width="3" height="1" fill="#F08018"/><rect x="6" y="11" width="9" height="1" fill="#D6D6D6"/><rect x="15" y="11" width="1" height="1" fill="#8C8C8C"/><rect x="0" y="12" width="1" height="1" fill="#8C8C8C"/><rect x="1" y="12" width="1" height="1" fill="#D6D6D6"/><rect x="2" y="12" width="1" height="1" fill="#000000"/><rect x="3" y="12" width="3" height="1" fill="#FFFFFF"/><rect x="6" y="12" width="2" height="1" fill="#D6D6D6"/><rect x="8" y="12" width="1" height="1" fill="#000000"/><rect x="9" y="12" width="1" height="1" fill="#D6D6D6"/><rect x="10" y="12" width="3" height="1" fill="#000000"/><rect x="13" y="12" width="2" height="1" fill="#D6D6D6"/><rect x="15" y="12" width="1" height="1" fill="#8C8C8C"/><rect x="0" y="13" width="16" height="1" fill="#8C8C8C"/></svg><div class="a t" style="left:92px;top:369px;line-height:14px;color:#000;font-weight:normal;">virtual_edit</div><div class="a t" style="left:261px;top:369px;line-height:14px;color:#000">Person</div><div class="a" style="left:63px;top:390px;width:3px;height:1px;background:repeating-linear-gradient(to right,#C8B45A 0 1px,transparent 1px 2px)"></div><div class="a" style="left:53px;top:386px;width:9px;height:9px;border:1px solid #C9B84E;background:#fff;box-sizing:border-box"></div><div class="a" style="left:55px;top:390px;width:5px;height:1px;background:#000"></div><div class="a" style="left:57px;top:388px;width:1px;height:5px;background:#000"></div><!--icon ctl--><svg class="a" style="left:70px;top:383px" width="16" height="14" shape-rendering="crispEdges"><rect x="0" y="0" width="1" height="1" fill="#8C8C8C"/><rect x="15" y="0" width="1" height="1" fill="#8C8C8C"/><rect x="0" y="1" width="1" height="1" fill="#8C8C8C"/><rect x="15" y="1" width="1" height="1" fill="#8C8C8C"/><rect x="0" y="2" width="16" height="1" fill="#8C8C8C"/><rect x="0" y="3" width="1" height="1" fill="#8C8C8C"/><rect x="6" y="3" width="2" height="1" fill="#8C8C8C"/><rect x="15" y="3" width="1" height="1" fill="#8C8C8C"/><rect x="0" y="4" width="16" height="1" fill="#8C8C8C"/><rect x="0" y="5" width="1" height="1" fill="#8C8C8C"/><rect x="1" y="5" width="14" height="1" fill="#D6D6D6"/><rect x="15" y="5" width="1" height="1" fill="#8C8C8C"/><rect x="0" y="6" width="1" height="1" fill="#8C8C8C"/><rect x="1" y="6" width="1" height="1" fill="#D6D6D6"/><rect x="2" y="6" width="4" height="1" fill="#000000"/><rect x="6" y="6" width="2" height="1" fill="#D6D6D6"/><rect x="8" y="6" width="1" height="1" fill="#000000"/><rect x="9" y="6" width="1" height="1" fill="#D6D6D6"/><rect x="10" y="6" width="4" height="1" fill="#000000"/><rect x="14" y="6" width="1" height="1" fill="#D6D6D6"/><rect x="15" y="6" width="1" height="1" fill="#8C8C8C"/><rect x="0" y="7" width="1" height="1" fill="#8C8C8C"/><rect x="1" y="7" width="1" height="1" fill="#D6D6D6"/><rect x="2" y="7" width="1" height="1" fill="#000000"/><rect x="3" y="7" width="1" height="1" fill="#FFFFFF"/><rect x="4" y="7" width="1" height="1" fill="#F08018"/><rect x="5" y="7" width="1" height="1" fill="#FFFFFF"/><rect x="6" y="7" width="9" height="1" fill="#D6D6D6"/><rect x="15" y="7" width="1" height="1" fill="#8C8C8C"/><rect x="0" y="8" width="1" height="1" fill="#8C8C8C"/><rect x="1" y="8" width="1" height="1" fill="#D6D6D6"/><rect x="2" y="8" width="1" height="1" fill="#000000"/><rect x="3" y="8" width="3" height="1" fill="#FFFFFF"/><rect x="6" y="8" width="2" height="1" fill="#D6D6D6"/><rect x="8" y="8" width="2" height="1" fill="#000000"/><rect x="10" y="8" width="1" height="1" fill="#D6D6D6"/><rect x="11" y="8" width="3" height="1" fill="#000000"/><rect x="14" y="8" width="1" height="1" fill="#D6D6D6"/><rect x="15" y="8" width="1" height="1" fill="#8C8C8C"/><rect x="0" y="9" width="1" height="1" fill="#8C8C8C"/><rect x="1" y="9" width="1" height="1" fill="#D6D6D6"/><rect x="2" y="9" width="4" height="1" fill="#000000"/><rect x="6" y="9" width="9" height="1" fill="#D6D6D6"/><rect x="15" y="9" width="1" height="1" fill="#8C8C8C"/><rect x="0" y="10" width="1" height="1" fill="#8C8C8C"/><rect x="1" y="10" width="1" height="1" fill="#D6D6D6"/><rect x="2" y="10" width="1" height="1" fill="#000000"/><rect x="3" y="10" width="3" height="1" fill="#FFFFFF"/><rect x="6" y="10" width="2" height="1" fill="#D6D6D6"/><rect x="8" y="10" width="4" height="1" fill="#000000"/><rect x="12" y="10" width="1" height="1" fill="#D6D6D6"/><rect x="13" y="10" width="1" height="1" fill="#000000"/><rect x="14" y="10" width="1" height="1" fill="#D6D6D6"/><rect x="15" y="10" width="1" height="1" fill="#8C8C8C"/><rect x="0" y="11" width="1" height="1" fill="#8C8C8C"/><rect x="1" y="11" width="1" height="1" fill="#D6D6D6"/><rect x="2" y="11" width="1" height="1" fill="#000000"/><rect x="3" y="11" width="3" height="1" fill="#F08018"/><rect x="6" y="11" width="9" height="1" fill="#D6D6D6"/><rect x="15" y="11" width="1" height="1" fill="#8C8C8C"/><rect x="0" y="12" width="1" height="1" fill="#8C8C8C"/><rect x="1" y="12" width="1" height="1" fill="#D6D6D6"/><rect x="2" y="12" width="1" height="1" fill="#000000"/><rect x="3" y="12" width="3" height="1" fill="#FFFFFF"/><rect x="6" y="12" width="2" height="1" fill="#D6D6D6"/><rect x="8" y="12" width="1" height="1" fill="#000000"/><rect x="9" y="12" width="1" height="1" fill="#D6D6D6"/><rect x="10" y="12" width="3" height="1" fill="#000000"/><rect x="13" y="12" width="2" height="1" fill="#D6D6D6"/><rect x="15" y="12" width="1" height="1" fill="#8C8C8C"/><rect x="0" y="13" width="16" height="1" fill="#8C8C8C"/></svg><div class="a t" style="left:92px;top:383px;line-height:14px;color:#000;font-weight:normal;">virtual_edit_fra<span style="letter-spacing:-1.1px">...</span></div><div class="a t" style="left:261px;top:383px;line-height:14px;color:#000">Person</div><div class="a" style="left:23px;top:404px;width:3px;height:1px;background:repeating-linear-gradient(to right,#C8B45A 0 1px,transparent 1px 2px)"></div><div class="a" style="left:13px;top:400px;width:9px;height:9px;border:1px solid #C9B84E;background:#fff;box-sizing:border-box"></div><div class="a" style="left:15px;top:404px;width:5px;height:1px;background:#000"></div><div class="a" style="left:17px;top:402px;width:1px;height:5px;background:#000"></div><div class="a t" style="left:30px;top:397px;line-height:14px;color:#000;font-weight:normal;">REAL</div><div class="a" style="left:23px;top:418px;width:3px;height:1px;background:repeating-linear-gradient(to right,#C8B45A 0 1px,transparent 1px 2px)"></div><div class="a" style="left:13px;top:414px;width:9px;height:9px;border:1px solid #C9B84E;background:#fff;box-sizing:border-box"></div><div class="a" style="left:15px;top:418px;width:5px;height:1px;background:#000"></div><div class="a" style="left:17px;top:416px;width:1px;height:5px;background:#000"></div><div class="a t" style="left:30px;top:411px;line-height:14px;color:#000;font-weight:normal;">STRING</div><div class="a" style="left:23px;top:432px;width:3px;height:1px;background:repeating-linear-gradient(to right,#C8B45A 0 1px,transparent 1px 2px)"></div><div class="a" style="left:13px;top:428px;width:9px;height:9px;border:1px solid #C9B84E;background:#fff;box-sizing:border-box"></div><div class="a" style="left:15px;top:432px;width:5px;height:1px;background:#000"></div><div class="a" style="left:17px;top:430px;width:1px;height:5px;background:#000"></div><div class="a t" style="left:30px;top:425px;line-height:14px;color:#000;font-weight:normal;">SearchWin</div><div class="a" style="left:23px;top:446px;width:3px;height:1px;background:repeating-linear-gradient(to right,#C8B45A 0 1px,transparent 1px 2px)"></div><div class="a" style="left:13px;top:442px;width:9px;height:9px;border:1px solid #C9B84E;background:#fff;box-sizing:border-box"></div><div class="a" style="left:15px;top:446px;width:5px;height:1px;background:#000"></div><div class="a" style="left:17px;top:444px;width:1px;height:5px;background:#000"></div><div class="a t" style="left:30px;top:439px;line-height:14px;color:#000;font-weight:normal;">TIME</div><div class="a" style="left:23px;top:460px;width:3px;height:1px;background:repeating-linear-gradient(to right,#C8B45A 0 1px,transparent 1px 2px)"></div><div class="a" style="left:13px;top:456px;width:9px;height:9px;border:1px solid #C9B84E;background:#fff;box-sizing:border-box"></div><div class="a" style="left:15px;top:460px;width:5px;height:1px;background:#000"></div><div class="a" style="left:17px;top:458px;width:1px;height:5px;background:#000"></div><div class="a t" style="left:30px;top:453px;line-height:14px;color:#000;font-weight:normal;">UINT</div><div class="a" style="left:23px;top:474px;width:3px;height:1px;background:repeating-linear-gradient(to right,#C8B45A 0 1px,transparent 1px 2px)"></div><div class="a" style="left:13px;top:470px;width:9px;height:9px;border:1px solid #C9B84E;background:#fff;box-sizing:border-box"></div><div class="a" style="left:15px;top:474px;width:5px;height:1px;background:#000"></div><div class="a" style="left:17px;top:472px;width:1px;height:5px;background:#000"></div><div class="a t" style="left:30px;top:467px;line-height:14px;color:#000;font-weight:normal;">VOID</div><div class="a" style="left:23px;top:488px;width:3px;height:1px;background:repeating-linear-gradient(to right,#C8B45A 0 1px,transparent 1px 2px)"></div><div class="a" style="left:13px;top:484px;width:9px;height:9px;border:1px solid #C9B84E;background:#fff;box-sizing:border-box"></div><div class="a" style="left:15px;top:488px;width:5px;height:1px;background:#000"></div><div class="a" style="left:17px;top:486px;width:1px;height:5px;background:#000"></div><div class="a t" style="left:30px;top:481px;line-height:14px;color:#000;font-weight:normal;">_TPL_Dialog</div><div class="a" style="left:23px;top:502px;width:3px;height:1px;background:repeating-linear-gradient(to right,#C8B45A 0 1px,transparent 1px 2px)"></div><div class="a" style="left:13px;top:498px;width:9px;height:9px;border:1px solid #C9B84E;background:#fff;box-sizing:border-box"></div><div class="a" style="left:15px;top:502px;width:5px;height:1px;background:#000"></div><div class="a" style="left:17px;top:500px;width:1px;height:5px;background:#000"></div><div class="a t" style="left:30px;top:495px;line-height:14px;color:#000;font-weight:normal;">_TPL_DialogExtended</div><div class="a" style="left:23px;top:516px;width:3px;height:1px;background:repeating-linear-gradient(to right,#C8B45A 0 1px,transparent 1px 2px)"></div><div class="a" style="left:13px;top:512px;width:9px;height:9px;border:1px solid #C9B84E;background:#fff;box-sizing:border-box"></div><div class="a" style="left:15px;top:516px;width:5px;height:1px;background:#000"></div><div class="a" style="left:17px;top:514px;width:1px;height:5px;background:#000"></div><div class="a t" style="left:30px;top:509px;line-height:14px;color:#000;font-weight:normal;">_TPL_ListDialog</div><div class="a" style="left:23px;top:530px;width:3px;height:1px;background:repeating-linear-gradient(to right,#C8B45A 0 1px,transparent 1px 2px)"></div><div class="a" style="left:13px;top:526px;width:9px;height:9px;border:1px solid #C9B84E;background:#fff;box-sizing:border-box"></div><div class="a" style="left:15px;top:530px;width:5px;height:1px;background:#000"></div><div class="a" style="left:17px;top:528px;width:1px;height:5px;background:#000"></div><div class="a t" style="left:30px;top:523px;line-height:14px;color:#000;font-weight:normal;">_TPL_TreeProject</div><div class="a" style="left:23px;top:544px;width:3px;height:1px;background:repeating-linear-gradient(to right,#C8B45A 0 1px,transparent 1px 2px)"></div><div class="a" style="left:13px;top:540px;width:9px;height:9px;border:1px solid #C9B84E;background:#fff;box-sizing:border-box"></div><div class="a" style="left:15px;top:544px;width:5px;height:1px;background:#000"></div><div class="a" style="left:17px;top:542px;width:1px;height:5px;background:#000"></div><div class="a t" style="left:30px;top:537px;line-height:14px;color:#000;font-weight:normal;">_TPL_VirtualListDialog</div></div></div><div class="a" style="left:4px;top:547px;width:328px;height:25px;background:#E9E2B4;"></div><div class="a" style="left:4px;top:550px;width:1px;height:21px;background:#F4F0D8;"></div><div class="a" style="left:6px;top:570px;width:58px;height:1px;background:#C9B84E;"></div><div class="a" style="left:6px;top:571px;width:59px;height:1px;background:#000000;"></div><div class="a" style="left:64px;top:550px;width:1px;height:21px;background:#C9B84E;"></div><div class="a t" style="left:16px;top:555px;">Classes</div><div class="a" style="left:65px;top:551px;width:59px;height:1px;background:#000000;"></div><div class="a" style="left:65px;top:552px;width:1px;height:17px;background:#000000;"></div><div class="a" style="left:123px;top:552px;width:1px;height:16px;background:#C9B84E;"></div><div class="a" style="left:66px;top:568px;width:57px;height:1px;background:#000000;"></div><div class="a" style="left:123px;top:568px;width:1px;height:1px;background:#C9B84E;"></div><div class="a" style="left:66px;top:552px;width:57px;height:1px;background:#F4F0D8;"></div><div class="a" style="left:66px;top:553px;width:1px;height:15px;background:#F4F0D8;"></div><div class="a t" style="left:79px;top:554px;">Actions</div><div class="a" style="left:336px;top:80px;width:1px;height:492px;background:#C9B84E;"></div><div class="a" style="left:337px;top:80px;width:1px;height:492px;background:#000000;"></div><div class="a" style="left:338px;top:80px;width:1px;height:492px;background:#F4F0D8;"></div><div class="a" style="left:342px;top:80px;width:294px;height:370px;background:#000000;"></div><div class="a" style="left:344px;top:82px;width:290px;height:366px;background:#E9E2B4;"></div><div class="a" style="left:344px;top:82px;width:290px;height:1px;background:#F4F0D8;"></div><div class="a" style="left:344px;top:82px;width:1px;height:366px;background:#F4F0D8;"></div><div class="a" style="left:344px;top:447px;width:290px;height:1px;background:#F4F0D8;"></div><div class="a" style="left:633px;top:82px;width:1px;height:366px;background:#F4F0D8;"></div><div class="a" style="left:346px;top:84px;width:281px;height:1px;background:#C9B84E;"></div><div class="a" style="left:346px;top:84px;width:1px;height:357px;background:#C9B84E;"></div><div class="a" style="left:346px;top:441px;width:282px;height:1px;background:#F4F0D8;"></div><div class="a" style="left:627px;top:84px;width:1px;height:358px;background:#F4F0D8;"></div><div class="a" style="left:487px;top:88px;width:1px;height:350px;background:#000000;"></div><div class="a" style="left:350px;top:157px;width:275px;height:1px;background:#000000;"></div><div class="a" style="left:350px;top:228px;width:275px;height:1px;background:#000000;"></div><div class="a" style="left:350px;top:298px;width:275px;height:1px;background:#000000;"></div><div class="a" style="left:350px;top:369px;width:275px;height:1px;background:#000000;"></div><div class="a" style="left:644px;top:89px;width:1px;height:455px;background:#9E9878;"></div><div class="a" style="left:647px;top:89px;width:1px;height:455px;background:#9E9878;"></div><div class="a" style="left:648px;top:80px;width:189px;height:1px;background:#C9B84E;"></div><div class="a" style="left:648px;top:79px;width:1px;height:472px;background:#C9B84E;"></div><div class="a" style="left:649px;top:80px;width:1px;height:471px;background:#C9B84E;"></div><div class="a" style="left:832px;top:81px;width:1px;height:470px;background:#F4F0D8;"></div><div class="a" style="left:650px;top:82px;width:181px;height:20px;background:#E9E2B4;"></div><div class="a" style="left:650px;top:82px;width:181px;height:1px;background:#F4F0D8;"></div><div class="a" style="left:650px;top:82px;width:1px;height:20px;background:#F4F0D8;"></div><div class="a" style="left:650px;top:101px;width:181px;height:1px;background:#000000;"></div><div class="a" style="left:830px;top:82px;width:1px;height:20px;background:#000000;"></div><div class="a" style="left:651px;top:100px;width:179px;height:1px;background:#C9B84E;"></div><div class="a" style="left:829px;top:83px;width:1px;height:18px;background:#C9B84E;"></div><svg class="a" style="left:675px;top:85px" width="16" height="15" shape-rendering="auto"><path d="M1 6 H6 L7 7 H14 V14 H1 Z" fill="#F4C898" stroke="#C08050" stroke-width="1"/><path d="M4 12 L12 3 L14 5 L6 13 Z" fill="#F0C040" stroke="#604000" stroke-width="0.8"/><rect x="12" y="0" width="3" height="3" fill="#E04040"/><rect x="4" y="10" width="5" height="1" fill="#000"/></svg><div class="a t" style="left:693px;top:86px;letter-spacing:0px">Field control properties</div><svg class="a" style="left:648px;top:104px" width="190" height="20" shape-rendering="auto"><path d="M2.5 16 L6 7 Q7.5 3.5 10 3.5 H60 Q62.5 3.5 64 7 L66 16" fill="none" stroke="#000" stroke-width="1"/><path d="M126.5 16 L130 7 Q131.5 3.5 134 3.5 H170 Q172.5 3.5 174 7 L176 16" fill="none" stroke="#000" stroke-width="1"/><path d="M66 18 L71 6 Q72.5 2.5 76 2.5 H116 Q119.5 2.5 120.5 6 L125 18 Z" fill="#fff" stroke="#000" stroke-width="1"/><rect x="66.5" y="17" width="58" height="2" fill="#fff"/></svg><div class="a" style="left:650px;top:120px;width:181px;height:1px;background:#F4F0D8;"></div><div class="a t" style="left:663px;top:109px;">Settings</div><div class="a t" style="left:727px;top:108px;">Layout</div><div class="a t" style="left:786px;top:109px;">Label</div><div class="a" style="left:650px;top:122px;width:181px;height:204px;background:#000000;"></div><div class="a" style="left:651px;top:123px;width:179px;height:202px;background:#FFFFFF;"></div><div class="a" style="left:651px;top:123px;width:69px;height:22px;background:#E9E2B4;"></div><div class="a" style="left:651px;top:123px;width:69px;height:1px;background:#F4F0D8;"></div><div class="a" style="left:651px;top:123px;width:1px;height:22px;background:#F4F0D8;"></div><div class="a" style="left:719px;top:123px;width:1px;height:22px;background:#C9B84E;"></div><div class="a" style="left:652px;top:144px;width:68px;height:1px;background:#C9B84E;"></div><div class="a" style="left:720px;top:123px;width:1px;height:202px;background:#000000;"></div><div class="a" style="left:651px;top:145px;width:70px;height:1px;background:#000000;"></div><div class="a" style="left:721px;top:123px;width:109px;height:22px;background:#E9E2B4;"></div><div class="a" style="left:721px;top:145px;width:109px;height:1px;background:#A8A07C;"></div><div class="a t" style="left:655px;top:129px;">Width</div><div class="a t" style="left:724px;top:128px;">270</div><div class="a" style="left:651px;top:146px;width:69px;height:21px;background:#E9E2B4;"></div><div class="a" style="left:651px;top:146px;width:69px;height:1px;background:#F4F0D8;"></div><div class="a" style="left:651px;top:146px;width:1px;height:21px;background:#F4F0D8;"></div><div class="a" style="left:719px;top:146px;width:1px;height:21px;background:#C9B84E;"></div><div class="a" style="left:652px;top:166px;width:68px;height:1px;background:#C9B84E;"></div><div class="a" style="left:720px;top:123px;width:1px;height:202px;background:#000000;"></div><div class="a" style="left:651px;top:167px;width:70px;height:1px;background:#000000;"></div><div class="a" style="left:721px;top:167px;width:109px;height:1px;background:#A8A07C;"></div><div class="a t" style="left:655px;top:151px;">Height</div><div class="a t" style="left:724px;top:150px;">310</div><div class="a" style="left:651px;top:168px;width:69px;height:21px;background:#E9E2B4;"></div><div class="a" style="left:651px;top:168px;width:69px;height:1px;background:#F4F0D8;"></div><div class="a" style="left:651px;top:168px;width:1px;height:21px;background:#F4F0D8;"></div><div class="a" style="left:719px;top:168px;width:1px;height:21px;background:#C9B84E;"></div><div class="a" style="left:652px;top:188px;width:68px;height:1px;background:#C9B84E;"></div><div class="a" style="left:720px;top:123px;width:1px;height:202px;background:#000000;"></div><div class="a" style="left:651px;top:189px;width:70px;height:1px;background:#000000;"></div><div class="a" style="left:721px;top:189px;width:109px;height:1px;background:#A8A07C;"></div><div class="a t" style="left:655px;top:173px;">Hor. cells</div><div class="a t" style="left:724px;top:172px;">2</div><div class="a" style="left:651px;top:190px;width:69px;height:21px;background:#E9E2B4;"></div><div class="a" style="left:651px;top:190px;width:69px;height:1px;background:#F4F0D8;"></div><div class="a" style="left:651px;top:190px;width:1px;height:21px;background:#F4F0D8;"></div><div class="a" style="left:719px;top:190px;width:1px;height:21px;background:#C9B84E;"></div><div class="a" style="left:652px;top:210px;width:68px;height:1px;background:#C9B84E;"></div><div class="a" style="left:720px;top:123px;width:1px;height:202px;background:#000000;"></div><div class="a" style="left:651px;top:211px;width:70px;height:1px;background:#000000;"></div><div class="a" style="left:721px;top:211px;width:109px;height:1px;background:#A8A07C;"></div><div class="a t" style="left:655px;top:195px;">Vert. cells</div><div class="a t" style="left:724px;top:194px;">5</div><div class="a" style="left:651px;top:212px;width:69px;height:21px;background:#E9E2B4;"></div><div class="a" style="left:651px;top:212px;width:69px;height:1px;background:#F4F0D8;"></div><div class="a" style="left:651px;top:212px;width:1px;height:21px;background:#F4F0D8;"></div><div class="a" style="left:719px;top:212px;width:1px;height:21px;background:#C9B84E;"></div><div class="a" style="left:652px;top:232px;width:68px;height:1px;background:#C9B84E;"></div><div class="a" style="left:720px;top:123px;width:1px;height:202px;background:#000000;"></div><div class="a" style="left:651px;top:233px;width:70px;height:1px;background:#000000;"></div><div class="a" style="left:721px;top:233px;width:109px;height:1px;background:#A8A07C;"></div><div class="a t" style="left:655px;top:217px;">Inner dist.</div><div class="a t" style="left:724px;top:216px;">4</div><div class="a" style="left:651px;top:234px;width:69px;height:21px;background:#E9E2B4;"></div><div class="a" style="left:651px;top:234px;width:69px;height:1px;background:#F4F0D8;"></div><div class="a" style="left:651px;top:234px;width:1px;height:21px;background:#F4F0D8;"></div><div class="a" style="left:719px;top:234px;width:1px;height:21px;background:#C9B84E;"></div><div class="a" style="left:652px;top:254px;width:68px;height:1px;background:#C9B84E;"></div><div class="a" style="left:720px;top:123px;width:1px;height:202px;background:#000000;"></div><div class="a" style="left:651px;top:255px;width:70px;height:1px;background:#000000;"></div><div class="a" style="left:721px;top:255px;width:109px;height:1px;background:#A8A07C;"></div><div class="a t" style="left:655px;top:239px;">Margin top</div><div class="a t" style="left:724px;top:238px;">0</div><div class="a" style="left:651px;top:256px;width:69px;height:21px;background:#E9E2B4;"></div><div class="a" style="left:651px;top:256px;width:69px;height:1px;background:#F4F0D8;"></div><div class="a" style="left:651px;top:256px;width:1px;height:21px;background:#F4F0D8;"></div><div class="a" style="left:719px;top:256px;width:1px;height:21px;background:#C9B84E;"></div><div class="a" style="left:652px;top:276px;width:68px;height:1px;background:#C9B84E;"></div><div class="a" style="left:720px;top:123px;width:1px;height:202px;background:#000000;"></div><div class="a" style="left:651px;top:277px;width:70px;height:1px;background:#000000;"></div><div class="a" style="left:721px;top:277px;width:109px;height:1px;background:#A8A07C;"></div><div class="a t" style="left:655px;top:261px;">Margin left</div><div class="a t" style="left:724px;top:260px;">0</div><div class="a" style="left:651px;top:278px;width:69px;height:21px;background:#E9E2B4;"></div><div class="a" style="left:651px;top:278px;width:69px;height:1px;background:#F4F0D8;"></div><div class="a" style="left:651px;top:278px;width:1px;height:21px;background:#F4F0D8;"></div><div class="a" style="left:719px;top:278px;width:1px;height:21px;background:#C9B84E;"></div><div class="a" style="left:652px;top:298px;width:68px;height:1px;background:#C9B84E;"></div><div class="a" style="left:720px;top:123px;width:1px;height:202px;background:#000000;"></div><div class="a" style="left:651px;top:299px;width:70px;height:1px;background:#000000;"></div><div class="a" style="left:721px;top:299px;width:109px;height:1px;background:#A8A07C;"></div><div class="a t" style="left:655px;top:283px;">Margin bottor</div><div class="a t" style="left:724px;top:282px;">0</div><div class="a" style="left:651px;top:300px;width:69px;height:21px;background:#E9E2B4;"></div><div class="a" style="left:651px;top:300px;width:69px;height:1px;background:#F4F0D8;"></div><div class="a" style="left:651px;top:300px;width:1px;height:21px;background:#F4F0D8;"></div><div class="a" style="left:719px;top:300px;width:1px;height:21px;background:#C9B84E;"></div><div class="a" style="left:652px;top:320px;width:68px;height:1px;background:#C9B84E;"></div><div class="a" style="left:720px;top:123px;width:1px;height:202px;background:#000000;"></div><div class="a" style="left:651px;top:321px;width:70px;height:1px;background:#000000;"></div><div class="a" style="left:721px;top:321px;width:109px;height:1px;background:#A8A07C;"></div><div class="a t" style="left:655px;top:305px;">Margin right</div><div class="a t" style="left:724px;top:304px;">0</div><div class="a" style="left:651px;top:322px;width:69px;height:3px;background:#E9E2B4;"></div><div class="a" style="left:651px;top:322px;width:1px;height:3px;background:#F4F0D8;"></div><div class="a" style="left:719px;top:322px;width:1px;height:3px;background:#C9B84E;"></div><div class="a" style="left:650px;top:326px;width:182px;height:1px;background:#F4F0D8;"></div><div class="a" style="left:651px;top:331px;width:180px;height:1px;background:#000000;"></div><div class="a" style="left:651px;top:331px;width:1px;height:17px;background:#000000;"></div><div class="a" style="left:652px;top:332px;width:178px;height:16px;background:#fff;"></div><div class="a" style="left:813px;top:332px;width:16px;height:16px;background:#E9E2B4;"></div><div class="a" style="left:813px;top:332px;width:16px;height:1px;background:#F4F0D8;"></div><div class="a" style="left:813px;top:332px;width:1px;height:16px;background:#F4F0D8;"></div><div class="a" style="left:813px;top:347px;width:16px;height:1px;background:#000000;"></div><div class="a" style="left:828px;top:332px;width:1px;height:16px;background:#000000;"></div><div class="a" style="left:814px;top:346px;width:14px;height:1px;background:#C9B84E;"></div><div class="a" style="left:827px;top:333px;width:1px;height:14px;background:#C9B84E;"></div><svg class="a" style="left:813px;top:332px" width="16" height="16" shape-rendering="crispEdges"><path d="M4 6 H11 L7.5 10 Z" fill="#000" shape-rendering="auto"/></svg><div class="a" style="left:650px;top:349px;width:181px;height:23px;background:#E9E2B4;"></div><div class="a" style="left:650px;top:349px;width:181px;height:1px;background:#F4F0D8;"></div><div class="a" style="left:650px;top:349px;width:1px;height:23px;background:#F4F0D8;"></div><div class="a" style="left:650px;top:371px;width:181px;height:1px;background:#000000;"></div><div class="a" style="left:830px;top:349px;width:1px;height:23px;background:#000000;"></div><div class="a" style="left:651px;top:370px;width:179px;height:1px;background:#C9B84E;"></div><div class="a" style="left:829px;top:350px;width:1px;height:21px;background:#C9B84E;"></div><svg class="a" style="left:693px;top:356px" width="15" height="12" shape-rendering="auto"><rect x="0" y="5" width="14" height="7" fill="#808080"/><rect x="1" y="6" width="12" height="5" fill="#F0F0F0"/><rect x="2" y="8" width="3" height="1" fill="#F08020"/><path d="M6 9 L12 2 L14 4 L8 10 Z" fill="#F0C040" stroke="#604000" stroke-width="0.7"/><rect x="12" y="0" width="2" height="2" fill="#E04040"/></svg><div class="a t" style="left:711px;top:356px;letter-spacing:0px">Style properties</div><div class="a" style="left:650px;top:374px;width:181px;height:176px;background:#000000;"></div><div class="a" style="left:651px;top:375px;width:179px;height:174px;background:#FFFFFF;"></div><div class="a" style="left:651px;top:375px;width:69px;height:22px;background:#E9E2B4;"></div><div class="a" style="left:651px;top:375px;width:69px;height:1px;background:#F4F0D8;"></div><div class="a" style="left:651px;top:375px;width:1px;height:22px;background:#F4F0D8;"></div><div class="a" style="left:719px;top:375px;width:1px;height:22px;background:#C9B84E;"></div><div class="a" style="left:652px;top:396px;width:68px;height:1px;background:#C9B84E;"></div><div class="a" style="left:720px;top:375px;width:1px;height:174px;background:#000000;"></div><div class="a" style="left:651px;top:397px;width:70px;height:1px;background:#000000;"></div><div class="a" style="left:721px;top:375px;width:109px;height:22px;background:#E9E2B4;"></div><div class="a" style="left:721px;top:397px;width:109px;height:1px;background:#A8A07C;"></div><div class="a t" style="left:655px;top:381px;">Name</div><div class="a t" style="left:724px;top:380px;">_panel_sunken</div><div class="a" style="left:651px;top:398px;width:69px;height:21px;background:#E9E2B4;"></div><div class="a" style="left:651px;top:398px;width:69px;height:1px;background:#F4F0D8;"></div><div class="a" style="left:651px;top:398px;width:1px;height:21px;background:#F4F0D8;"></div><div class="a" style="left:719px;top:398px;width:1px;height:21px;background:#C9B84E;"></div><div class="a" style="left:652px;top:418px;width:68px;height:1px;background:#C9B84E;"></div><div class="a" style="left:720px;top:375px;width:1px;height:174px;background:#000000;"></div><div class="a" style="left:651px;top:419px;width:70px;height:1px;background:#000000;"></div><div class="a" style="left:721px;top:419px;width:109px;height:1px;background:#A8A07C;"></div><div class="a t" style="left:655px;top:403px;">Transparent</div><div class="a" style="left:651px;top:420px;width:69px;height:21px;background:#E9E2B4;"></div><div class="a" style="left:651px;top:420px;width:69px;height:1px;background:#F4F0D8;"></div><div class="a" style="left:651px;top:420px;width:1px;height:21px;background:#F4F0D8;"></div><div class="a" style="left:719px;top:420px;width:1px;height:21px;background:#C9B84E;"></div><div class="a" style="left:652px;top:440px;width:68px;height:1px;background:#C9B84E;"></div><div class="a" style="left:720px;top:375px;width:1px;height:174px;background:#000000;"></div><div class="a" style="left:651px;top:441px;width:70px;height:1px;background:#000000;"></div><div class="a" style="left:721px;top:441px;width:109px;height:1px;background:#A8A07C;"></div><div class="a t" style="left:655px;top:425px;">Border</div><div class="a" style="left:651px;top:442px;width:69px;height:21px;background:#E9E2B4;"></div><div class="a" style="left:651px;top:442px;width:69px;height:1px;background:#F4F0D8;"></div><div class="a" style="left:651px;top:442px;width:1px;height:21px;background:#F4F0D8;"></div><div class="a" style="left:719px;top:442px;width:1px;height:21px;background:#C9B84E;"></div><div class="a" style="left:652px;top:462px;width:68px;height:1px;background:#C9B84E;"></div><div class="a" style="left:720px;top:375px;width:1px;height:174px;background:#000000;"></div><div class="a" style="left:651px;top:463px;width:70px;height:1px;background:#000000;"></div><div class="a" style="left:721px;top:463px;width:109px;height:1px;background:#A8A07C;"></div><div class="a t" style="left:655px;top:447px;">Border style</div><div class="a t" style="left:724px;top:446px;">BS_Panel</div><div class="a" style="left:651px;top:464px;width:69px;height:21px;background:#E9E2B4;"></div><div class="a" style="left:651px;top:464px;width:69px;height:1px;background:#F4F0D8;"></div><div class="a" style="left:651px;top:464px;width:1px;height:21px;background:#F4F0D8;"></div><div class="a" style="left:719px;top:464px;width:1px;height:21px;background:#C9B84E;"></div><div class="a" style="left:652px;top:484px;width:68px;height:1px;background:#C9B84E;"></div><div class="a" style="left:720px;top:375px;width:1px;height:174px;background:#000000;"></div><div class="a" style="left:651px;top:485px;width:70px;height:1px;background:#000000;"></div><div class="a" style="left:721px;top:485px;width:109px;height:1px;background:#A8A07C;"></div><div class="a t" style="left:655px;top:469px;">Shadow stye</div><div class="a t" style="left:724px;top:468px;">BSS_Sunken</div><div class="a" style="left:651px;top:486px;width:69px;height:21px;background:#E9E2B4;"></div><div class="a" style="left:651px;top:486px;width:69px;height:1px;background:#F4F0D8;"></div><div class="a" style="left:651px;top:486px;width:1px;height:21px;background:#F4F0D8;"></div><div class="a" style="left:719px;top:486px;width:1px;height:21px;background:#C9B84E;"></div><div class="a" style="left:652px;top:506px;width:68px;height:1px;background:#C9B84E;"></div><div class="a" style="left:720px;top:375px;width:1px;height:174px;background:#000000;"></div><div class="a" style="left:651px;top:507px;width:70px;height:1px;background:#000000;"></div><div class="a" style="left:721px;top:507px;width:109px;height:1px;background:#A8A07C;"></div><div class="a t" style="left:655px;top:491px;">Line width</div><div class="a t" style="left:724px;top:490px;">2</div><div class="a" style="left:651px;top:508px;width:69px;height:21px;background:#E9E2B4;"></div><div class="a" style="left:651px;top:508px;width:69px;height:1px;background:#F4F0D8;"></div><div class="a" style="left:651px;top:508px;width:1px;height:21px;background:#F4F0D8;"></div><div class="a" style="left:719px;top:508px;width:1px;height:21px;background:#C9B84E;"></div><div class="a" style="left:652px;top:528px;width:68px;height:1px;background:#C9B84E;"></div><div class="a" style="left:720px;top:375px;width:1px;height:174px;background:#000000;"></div><div class="a" style="left:651px;top:529px;width:70px;height:1px;background:#000000;"></div><div class="a" style="left:721px;top:529px;width:109px;height:1px;background:#A8A07C;"></div><div class="a t" style="left:655px;top:513px;">Line strength</div><div class="a t" style="left:724px;top:512px;">0</div><div class="a" style="left:651px;top:530px;width:69px;height:19px;background:#E9E2B4;"></div><div class="a" style="left:651px;top:530px;width:1px;height:19px;background:#F4F0D8;"></div><div class="a" style="left:719px;top:530px;width:1px;height:19px;background:#C9B84E;"></div><div class="a" style="left:650px;top:550px;width:182px;height:1px;background:#F4F0D8;"></div><div class="a" style="left:728px;top:403px;width:12px;height:12px;background:#000;"></div><div class="a" style="left:729px;top:404px;width:10px;height:10px;background:#fff;"></div><div class="a" style="left:728px;top:425px;width:12px;height:12px;background:#000;"></div><div class="a" style="left:729px;top:426px;width:10px;height:10px;background:#fff;"></div><svg class="a" style="left:730px;top:428px" width="8" height="6" shape-rendering="crispEdges"><rect x="6" y="0" width="2" height="1" fill="#000000"/><rect x="0" y="1" width="1" height="1" fill="#000000"/><rect x="5" y="1" width="3" height="1" fill="#000000"/><rect x="0" y="2" width="2" height="1" fill="#000000"/><rect x="4" y="2" width="3" height="1" fill="#000000"/><rect x="1" y="3" width="5" height="1" fill="#000000"/><rect x="1" y="4" width="4" height="1" fill="#000000"/><rect x="2" y="5" width="2" height="1" fill="#000000"/></svg><div class="a" style="left:339px;top:552px;width:498px;height:1px;background:#C9B84E;"></div><div class="a" style="left:339px;top:553px;width:498px;height:1px;background:#000000;"></div><svg class="a" style="left:330px;top:550px" width="511" height="22" shape-rendering="auto"><path d="M255.5 3 L251 14 Q249.5 16.5 247 16.5 H143 Q140.5 16.5 139 14 L135 3" fill="none" stroke="#000" stroke-width="1"/><path d="M258.5 3 L263 14 Q264.5 16.5 267 16.5 H372 Q374.5 16.5 375.5 14 L378.5 3" fill="none" stroke="#000" stroke-width="1"/><path d="M12.5 2 L17 14 Q18.5 17 21 17 H127 Q129.5 17 131 14 L135 2 Z" fill="#fff" stroke="#000" stroke-width="1"/></svg><div class="a t" style="left:387px;top:553px;">Design</div><div class="a t" style="left:501px;top:553px;">Properties</div><div class="a t" style="left:611px;top:553px;">Context classes</div><svg class="a" style="left:0;top:0" width="841" height="576" shape-rendering="crispEdges"><ellipse cx="747" cy="161.3" rx="34.6" ry="65.1" fill="none" stroke="#7E0A0A" stroke-width="3.4"/><ellipse cx="403.5" cy="558" rx="71" ry="10.5" fill="none" stroke="#7E0A0A" stroke-width="3.2"/></svg></body></html>
